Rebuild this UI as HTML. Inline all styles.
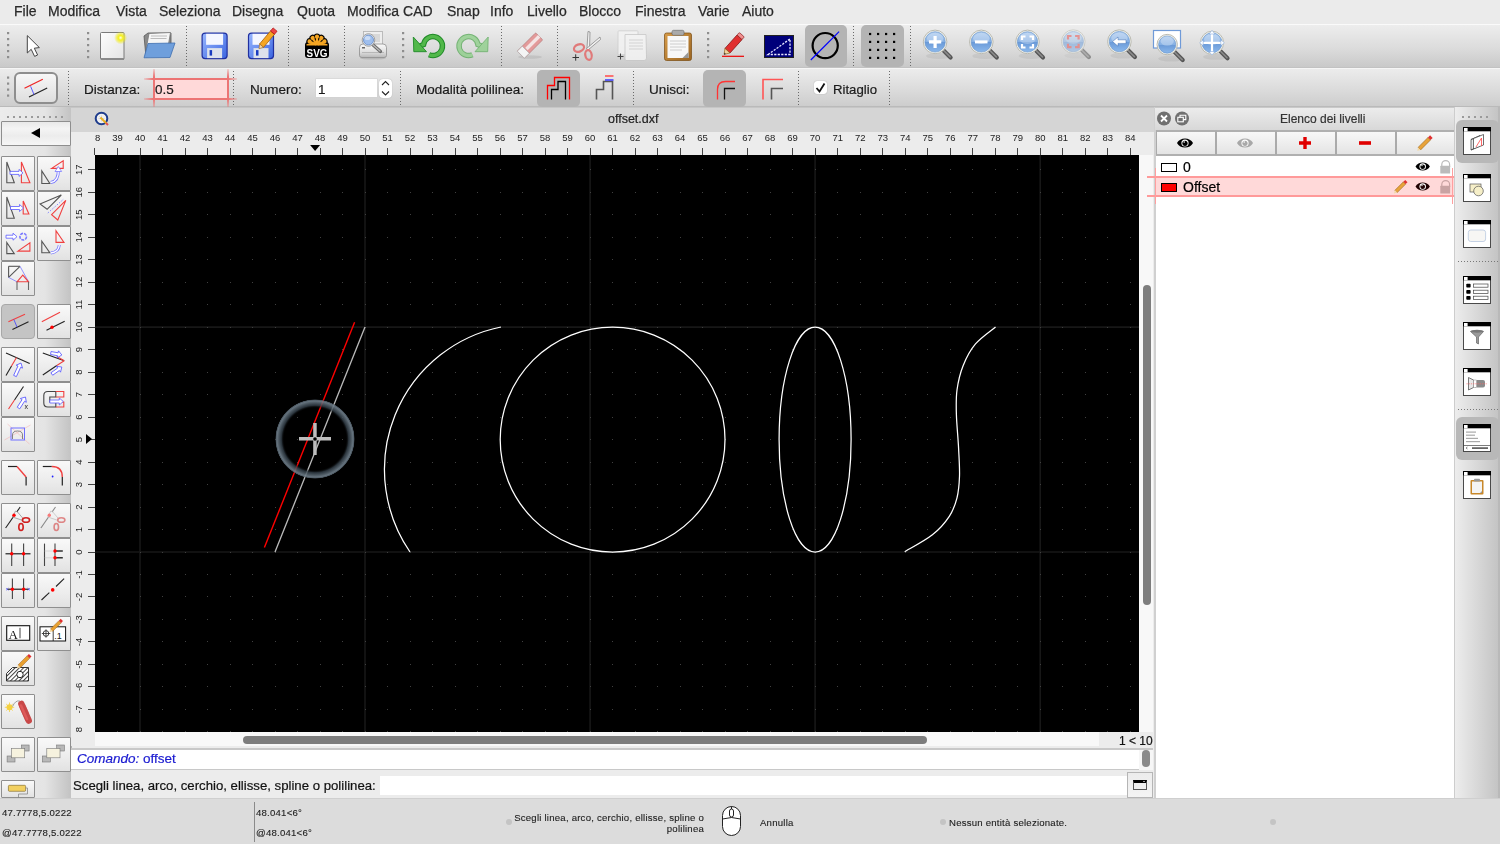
<!DOCTYPE html><html><head><meta charset="utf-8"><style>
*{margin:0;padding:0;box-sizing:border-box}
html,body{width:1500px;height:844px;overflow:hidden;background:#ececec;font-family:"Liberation Sans",sans-serif;color:#1a1a1a}
.a{position:absolute}
.t{position:absolute;white-space:nowrap;line-height:1;will-change:transform;-webkit-text-stroke-width:.2px}
#menubar{left:0;top:0;width:1500px;height:24px;background:#ebebeb}
#menubar span{will-change:transform;-webkit-text-stroke:.25px #2a2a2a;position:absolute;top:4px;font-size:14px;color:#2a2a2a;white-space:nowrap;line-height:1}
#tb1{left:0;top:24px;width:1500px;height:44px;background:linear-gradient(#ededed,#dcdcdc 55%,#c9c9c9);border-top:1px solid #fafafa;border-bottom:1px solid #c2c2c2}
#tb2{left:0;top:68px;width:1500px;height:39px;background:linear-gradient(#ececec,#dadada 60%,#cdcdcd);border-top:1px solid #f6f6f6;border-bottom:1px solid #bababa}
.sep{position:absolute;width:1px;background-image:linear-gradient(#6a6a6a 50%,transparent 50%);background-size:1px 3px}
.hl{position:absolute;background:#b4b4b4;border-radius:5px}
#leftcol{left:0;top:107px;width:72px;height:691px;background:linear-gradient(90deg,#ececec 0,#e4e4e4 45px,#c4c4c4 70px);border-right:1.5px solid #b4b4b4}
.lb{position:absolute;width:34px;height:35px;background:linear-gradient(#f9f9f9,#ececec 60%,#e2e2e2);border:1px solid #8f8f8f;border-radius:1px}
.lb.on{background:#c4c4c4;border-color:#a8a8a8;border-radius:4px}
#tabbar{left:71px;top:107px;width:1083px;height:25px;background:#d5d5d5;border-top:1px solid #c6c6c6}
#ruler-top{left:71px;top:132px;width:1083px;height:23px;background:#ececec}
#ruler-left{left:71px;top:155px;width:24px;height:591px;background:#ececec}
#draw{left:95px;top:155px;width:1044px;height:577px;background:#000}
#vscroll{left:1139px;top:155px;width:14px;height:577px;background:#f8f8f8}
#hscroll{left:95px;top:732px;width:1004px;height:14px;background:#f8f8f8}
#zoomlbl{left:1099px;top:732px;width:54px;height:14px;background:#ececec}
#cmdhist{left:71px;top:748px;width:1082px;height:22px;background:#fff;border-top:2px solid #c8c8c8;border-bottom:1px solid #c8c8c8}
#cmdrow{left:71px;top:770px;width:1082px;height:28px;background:#ececec}
#dock{left:1154px;top:107px;width:301px;height:691px;background:#fff;border-left:2px solid #d0d0d0}
#righttb{left:1454px;top:107px;width:46px;height:691px;background:linear-gradient(90deg,#ededed 0,#c4c4c4 43px,#b9b9b9 43px);border-left:1.5px solid #cdcdcd}
#status{left:0;top:798px;width:1500px;height:46px;background:#dcdcdc;border-top:1px solid #cfcfcf}
.st{font-size:9.6px;color:#1e1e1e;letter-spacing:.22px;-webkit-text-stroke-width:.12px}
</style></head><body><div id="menubar" class="a"><span style="left:14.3px">File</span><span style="left:48.3px">Modifica</span><span style="left:115.7px">Vista</span><span style="left:159.3px">Seleziona</span><span style="left:232.3px">Disegna</span><span style="left:296.7px">Quota</span><span style="left:347.3px">Modifica CAD</span><span style="left:446.7px">Snap</span><span style="left:490px">Info</span><span style="left:526.7px">Livello</span><span style="left:579.3px">Blocco</span><span style="left:635px">Finestra</span><span style="left:698.3px">Varie</span><span style="left:742.3px">Aiuto</span></div><div id="tb1" class="a"></div><div class="sep" style="left:185.5px;top:26px;height:40px"></div><div class="sep" style="left:287.5px;top:26px;height:40px"></div><div class="sep" style="left:343.5px;top:26px;height:40px"></div><div class="sep" style="left:501px;top:26px;height:40px"></div><div class="sep" style="left:556.5px;top:26px;height:40px"></div><div class="sep" style="left:852.5px;top:26px;height:40px"></div><div class="sep" style="left:909.5px;top:26px;height:40px"></div><div class="hl" style="left:805px;top:25px;width:42px;height:42px"></div><div class="hl" style="left:861px;top:25px;width:43px;height:42px"></div><div id="tb2" class="a"></div><div class="sep" style="left:67.5px;top:71px;height:34px"></div><div class="sep" style="left:233px;top:71px;height:34px"></div><div class="sep" style="left:399.5px;top:71px;height:34px"></div><div class="sep" style="left:633px;top:71px;height:34px"></div><div class="sep" style="left:798px;top:71px;height:34px"></div><div class="sep" style="left:889px;top:71px;height:34px"></div><div class="a" style="left:14px;top:72px;width:44px;height:32px;border:2px solid #8e8e8e;border-radius:6px;background:linear-gradient(#f7f7f7,#dedede)"></div><div class="t" style="left:84px;top:82.5px;font-size:13.5px">Distanza:</div><div class="a" style="left:153px;top:78px;width:75px;height:21px;background:#ffd9d9"></div><div class="a" style="left:144px;top:77.5px;width:93px;height:2px;background:linear-gradient(90deg,rgba(240,110,110,.2),#ec7474 9px,#ec7474 84px,rgba(240,110,110,.2))"></div><div class="a" style="left:144px;top:97.5px;width:93px;height:2px;background:linear-gradient(90deg,rgba(240,110,110,.2),#ec7474 9px,#ec7474 84px,rgba(240,110,110,.2))"></div><div class="a" style="left:152.5px;top:69px;width:2px;height:39px;background:linear-gradient(rgba(240,110,110,.2),#ec7474 8px,#ec7474 30px,rgba(240,110,110,.2))"></div><div class="a" style="left:227px;top:69px;width:2px;height:39px;background:linear-gradient(rgba(240,110,110,.2),#ec7474 8px,#ec7474 30px,rgba(240,110,110,.2))"></div><div class="t" style="left:155px;top:82.5px;font-size:13.5px">0.5</div><div class="t" style="left:250px;top:82.5px;font-size:13.5px">Numero:</div><div class="a" style="left:316px;top:79px;width:61px;height:18px;background:#fff;box-shadow:0 0 0 .5px #d0d0d0"></div><div class="t" style="left:318px;top:82.5px;font-size:13.5px">1</div><div class="a" style="left:379px;top:79px;width:13px;height:19px;background:#fff;border-radius:4px;box-shadow:0 0 1px #999"></div><div class="t" style="left:416px;top:82.5px;font-size:13.5px">Modalità polilinea:</div><div class="hl" style="left:537px;top:70px;width:43px;height:37px"></div><div class="t" style="left:649px;top:82.5px;font-size:13.5px">Unisci:</div><div class="hl" style="left:703px;top:70px;width:43px;height:37px"></div><div class="a" style="left:814px;top:81px;width:13px;height:13px;background:#fff;border-radius:3px;box-shadow:0 0 1px #888"></div><div class="t" style="left:833px;top:82.5px;font-size:13.2px">Ritaglio</div><svg class="a" style="left:0;top:24px" width="1300" height="84"><g transform="translate(0 -24)"><defs><linearGradient id="gBlue" x1="0" y1="0" x2="0" y2="1"><stop offset="0" stop-color="#a9c8ee"/><stop offset=".5" stop-color="#86b0e4"/><stop offset=".52" stop-color="#6a9ad8"/><stop offset="1" stop-color="#8bb8ec"/></linearGradient><linearGradient id="gPaper" x1="0" y1="0" x2="1" y2="1"><stop offset="0" stop-color="#fdfdfd"/><stop offset="1" stop-color="#e4e4e4"/></linearGradient><radialGradient id="gGlow"><stop offset="0" stop-color="#ffffe0"/><stop offset=".35" stop-color="#f5f020"/><stop offset="1" stop-color="#f0e800" stop-opacity="0"/></radialGradient><linearGradient id="gFloppy" x1="0" y1="0" x2="1" y2="1"><stop offset="0" stop-color="#9ab8ff"/><stop offset="1" stop-color="#3a64e0"/></linearGradient><linearGradient id="gGreen" x1="0" y1="0" x2="0" y2="1"><stop offset="0" stop-color="#7cd46a"/><stop offset="1" stop-color="#2f9a2a"/></linearGradient><linearGradient id="gClip" x1="0" y1="0" x2="1" y2="1"><stop offset="0" stop-color="#d79c4a"/><stop offset="1" stop-color="#9a6420"/></linearGradient></defs><rect x="7" y="32" width="2.2" height="2.2" fill="#8e8e8e"/><rect x="7" y="38" width="2.2" height="2.2" fill="#8e8e8e"/><rect x="7" y="44" width="2.2" height="2.2" fill="#8e8e8e"/><rect x="7" y="50" width="2.2" height="2.2" fill="#8e8e8e"/><rect x="7" y="56" width="2.2" height="2.2" fill="#8e8e8e"/><rect x="87" y="32" width="2.2" height="2.2" fill="#8e8e8e"/><rect x="87" y="38" width="2.2" height="2.2" fill="#8e8e8e"/><rect x="87" y="44" width="2.2" height="2.2" fill="#8e8e8e"/><rect x="87" y="50" width="2.2" height="2.2" fill="#8e8e8e"/><rect x="87" y="56" width="2.2" height="2.2" fill="#8e8e8e"/><rect x="402" y="32" width="2.2" height="2.2" fill="#8e8e8e"/><rect x="402" y="38" width="2.2" height="2.2" fill="#8e8e8e"/><rect x="402" y="44" width="2.2" height="2.2" fill="#8e8e8e"/><rect x="402" y="50" width="2.2" height="2.2" fill="#8e8e8e"/><rect x="402" y="56" width="2.2" height="2.2" fill="#8e8e8e"/><rect x="707" y="32" width="2.2" height="2.2" fill="#8e8e8e"/><rect x="707" y="38" width="2.2" height="2.2" fill="#8e8e8e"/><rect x="707" y="44" width="2.2" height="2.2" fill="#8e8e8e"/><rect x="707" y="50" width="2.2" height="2.2" fill="#8e8e8e"/><rect x="707" y="56" width="2.2" height="2.2" fill="#8e8e8e"/><rect x="7" y="76.5" width="2.2" height="2.2" fill="#8e8e8e"/><rect x="7" y="82.5" width="2.2" height="2.2" fill="#8e8e8e"/><rect x="7" y="88.5" width="2.2" height="2.2" fill="#8e8e8e"/><rect x="7" y="94.5" width="2.2" height="2.2" fill="#8e8e8e"/><path d="M27.3 35.6 L27.3 53 L31.2 49.3 L34.6 56.4 L37.6 55 L34.3 48.2 L39.4 47.6 Z" fill="#fff" stroke="#444" stroke-width="1" stroke-linejoin="round"/><rect x="100.5" y="32.5" width="23.5" height="27" rx="1" fill="url(#gPaper)" stroke="#7a7a7a" stroke-width="1"/><rect x="101" y="58" width="23" height="2" fill="#8a8a8a"/><circle cx="120.6" cy="37.8" r="6.5" fill="url(#gGlow)"/><path d="M144 36 L148 33 L171 33 L171 53 L146 57 Z" fill="#8a8a8a" stroke="#555" stroke-width=".8"/><path d="M149 33.5 L170.5 32.5 L168 47 L146 50 Z" fill="#f6f6f6" stroke="#777" stroke-width=".8"/><path d="M151 36 H167 M150.5 38.5 H166.5" stroke="#bbb" stroke-width="1.2"/><path d="M148 43.5 L175 43 L170 57.5 L144 57.8 Z" fill="#6f9fdc" stroke="#3f6fb0" stroke-width=".8"/><rect x="202.1" y="33.1" width="25" height="25.5" rx="3" fill="url(#gFloppy)" stroke="#2030a0" stroke-width="1.2"/><rect x="206.1" y="33.800000000000004" width="17" height="11" fill="#f4f6ff"/><rect x="207.1" y="48.1" width="15" height="10" fill="#dde2ec"/><rect x="209.6" y="50.1" width="2.5" height="5.5" fill="#1a3cc0"/><rect x="248.5" y="33.1" width="25" height="25.5" rx="3" fill="url(#gFloppy)" stroke="#2030a0" stroke-width="1.2"/><rect x="252.5" y="33.800000000000004" width="17" height="11" fill="#f4f6ff"/><rect x="253.5" y="48.1" width="15" height="10" fill="#dde2ec"/><rect x="256" y="50.1" width="2.5" height="5.5" fill="#1a3cc0"/><g transform="translate(268 38) rotate(-50)"><rect x="-10" y="-2.6" width="17" height="5.2" fill="#f5a623" stroke="#a05a00" stroke-width=".7"/><rect x="7" y="-2.6" width="4" height="5.2" fill="#e44" stroke="#a00" stroke-width=".6"/><path d="M-10 -2.6 L-14 0 L-10 2.6Z" fill="#f3d9a5" stroke="#a05a00" stroke-width=".5"/></g><g><g transform="translate(317 45) rotate(-64)"><path d="M0 0 L0 -7.5" stroke="#000" stroke-width="4.4" stroke-linecap="round"/><circle cx="0" cy="-8.3" r="3.2" fill="#000"/></g><g transform="translate(317 45) rotate(-32)"><path d="M0 0 L0 -7.5" stroke="#000" stroke-width="4.4" stroke-linecap="round"/><circle cx="0" cy="-8.3" r="3.2" fill="#000"/></g><g transform="translate(317 45) rotate(0)"><path d="M0 0 L0 -7.5" stroke="#000" stroke-width="4.4" stroke-linecap="round"/><circle cx="0" cy="-8.3" r="3.2" fill="#000"/></g><g transform="translate(317 45) rotate(32)"><path d="M0 0 L0 -7.5" stroke="#000" stroke-width="4.4" stroke-linecap="round"/><circle cx="0" cy="-8.3" r="3.2" fill="#000"/></g><g transform="translate(317 45) rotate(64)"><path d="M0 0 L0 -7.5" stroke="#000" stroke-width="4.4" stroke-linecap="round"/><circle cx="0" cy="-8.3" r="3.2" fill="#000"/></g><rect x="305" y="42" width="24" height="16" rx="3" fill="#000"/><g transform="translate(317 45) rotate(-64)"><path d="M0 -1 L0 -7" stroke="#f5a623" stroke-width="2.2"/><circle cx="0" cy="-8.3" r="2.1" fill="#f5a623"/></g><g transform="translate(317 45) rotate(-32)"><path d="M0 -1 L0 -7" stroke="#f5a623" stroke-width="2.2"/><circle cx="0" cy="-8.3" r="2.1" fill="#f5a623"/></g><g transform="translate(317 45) rotate(0)"><path d="M0 -1 L0 -7" stroke="#f5a623" stroke-width="2.2"/><circle cx="0" cy="-8.3" r="2.1" fill="#f5a623"/></g><g transform="translate(317 45) rotate(32)"><path d="M0 -1 L0 -7" stroke="#f5a623" stroke-width="2.2"/><circle cx="0" cy="-8.3" r="2.1" fill="#f5a623"/></g><g transform="translate(317 45) rotate(64)"><path d="M0 -1 L0 -7" stroke="#f5a623" stroke-width="2.2"/><circle cx="0" cy="-8.3" r="2.1" fill="#f5a623"/></g><path d="M306.5 44.2 Q317 40.5 327.5 44.2 L327.5 45.5 L306.5 45.5Z" fill="#f5a623"/><text x="317" y="56.5" font-size="11.5" font-weight="bold" text-anchor="middle" fill="#fff" font-family="Liberation Sans" textLength="21" lengthAdjust="spacingAndGlyphs">SVG</text></g><defs><linearGradient id="gPrn" x1="0" y1="0" x2="0" y2="1"><stop offset="0" stop-color="#fafafa"/><stop offset=".6" stop-color="#dedede"/><stop offset="1" stop-color="#b8b8b8"/></linearGradient></defs><ellipse cx="373" cy="58" rx="13" ry="1.6" fill="#000" opacity=".12"/><rect x="363.5" y="31.5" width="19" height="15" fill="#eee" stroke="#b0b0b0" stroke-width=".8"/><rect x="371" y="34" width="9" height="8" fill="#d8d8d8"/><path d="M359.5 47.5 Q359.5 44 363 44 L383 44 Q386.5 44 386.5 47.5 L386.5 55.5 Q386.5 57.5 384 57.5 L362 57.5 Q359.5 57.5 359.5 55.5Z" fill="url(#gPrn)" stroke="#8e8e8e" stroke-width=".8"/><path d="M362 52.5 H384" stroke="#a8a8a8" stroke-width=".7"/><rect x="362" y="47" width="3" height="1.5" fill="#666"/><path d="M372 44 L380.5 51.5" stroke="#6a6a6a" stroke-width="3.2" stroke-linecap="round"/><path d="M372 44 L380 51" stroke="#bbb" stroke-width="1.2" stroke-linecap="round"/><circle cx="368.5" cy="40" r="6.3" fill="#f2f2f2" stroke="#9a9a9a" stroke-width=".9"/><circle cx="368.5" cy="40" r="5" fill="#9fbfee" stroke="#5f86c4" stroke-width=".8"/><ellipse cx="367.5" cy="38" rx="3" ry="2" fill="#fff" opacity=".45"/><g transform="translate(412.5 0)" opacity="1"><path d="M7.5 46 L11.1 44.5 A9.5 9.5 0 1 1 16.6 54.7" fill="none" stroke="#208a28" stroke-width="5.4"/><path d="M7.5 46 L11.1 44.5 A9.5 9.5 0 1 1 16.6 54.7" fill="none" stroke="#52b84a" stroke-width="3.4"/><path d="M0.8 37 L1.3 51.7 L14 51.7 Z" fill="#52b84a" stroke="#208a28" stroke-width=".9" stroke-linejoin="round"/></g><g transform="translate(489.0 0) scale(-1 1)" opacity="0.8"><path d="M7.5 46 L11.1 44.5 A9.5 9.5 0 1 1 16.6 54.7" fill="none" stroke="#5aa85a" stroke-width="5.4"/><path d="M7.5 46 L11.1 44.5 A9.5 9.5 0 1 1 16.6 54.7" fill="none" stroke="#8fcf8a" stroke-width="3.4"/><path d="M0.8 37 L1.3 51.7 L14 51.7 Z" fill="#8fcf8a" stroke="#5aa85a" stroke-width=".9" stroke-linejoin="round"/></g><ellipse cx="530" cy="57" rx="12" ry="1.8" fill="#000" opacity=".08"/><g transform="translate(530 45.5) rotate(-45)"><rect x="-13" y="-5" width="26" height="10" rx="1" fill="#e39a9a" stroke="#b07070" stroke-width=".6"/><rect x="-5" y="-1.7" width="18" height="3.4" fill="#f4e4e4"/><rect x="-13" y="-5" width="7" height="10" fill="#f4f4f4" stroke="#aaa" stroke-width=".6"/></g><path d="M587 48 L588 31.5 L590 32 L589.5 49" fill="#f2f2f2" stroke="#888" stroke-width=".8"/><path d="M586 49 L600 37 L600.5 39.5 L588 50" fill="#f2f2f2" stroke="#888" stroke-width=".8"/><ellipse cx="579" cy="48" rx="5.2" ry="3.6" fill="none" stroke="#e07a7a" stroke-width="2.2" transform="rotate(-20 579 48)"/><ellipse cx="588.5" cy="55" rx="3.2" ry="5" fill="none" stroke="#e07a7a" stroke-width="2.2" transform="rotate(-10 588.5 55)"/><path d="M572.5 57.5 H579 M575.7 54.3 V60.7" stroke="#333" stroke-width="1"/><g opacity=".8"><rect x="618" y="30.8" width="20" height="24" rx="1" fill="#f4f4f4" stroke="#c8c8c8" stroke-width=".8"/><path d="M625 34.5 H646 L646.5 58 Q646.5 60.5 644 60.5 L626 60.5 Q625 60.5 625 59Z" fill="#f6f6f6" stroke="#c0c0c0" stroke-width=".8"/><path d="M629 40 H643 M629 43 H643 M629 46 H643 M629 49 H643" stroke="#ccc" stroke-width=".9"/></g><path d="M617.5 56.5 H623.5 M620.5 53.5 V59.5" stroke="#444" stroke-width="1"/><rect x="664.5" y="33" width="27" height="27.5" rx="2" fill="url(#gClip)" stroke="#7a4a10" stroke-width=".7"/><rect x="667.5" y="36" width="21" height="22" fill="#f8f8f8"/><path d="M670 41 H686 M670 44 H686 M670 47 H686 M670 50 H682" stroke="#c8c8c8" stroke-width=".9"/><rect x="672" y="30.3" width="12" height="5" rx="1.5" fill="#aaa" stroke="#666" stroke-width=".6"/><path d="M682.5 58 L688.5 52 L688.5 58Z" fill="#999"/><path d="M722 56.3 H744" stroke="#e00" stroke-width="1.2"/><g transform="translate(733.5 44) rotate(-48)"><rect x="-9" y="-3.4" width="18" height="6.8" fill="#e03030" stroke="#801010" stroke-width=".7"/><rect x="9" y="-3.4" width="3.5" height="6.8" rx="1" fill="#f09090" stroke="#801010" stroke-width=".6"/><path d="M-9 -3.4 L-14 0 L-9 3.4Z" fill="#f1d3a0" stroke="#8a5a10" stroke-width=".6"/><path d="M-12.5 -1 L-14.3 0 L-12.5 1Z" fill="#333"/></g><rect x="764.5" y="35.5" width="29" height="22" fill="#00007a" stroke="#222" stroke-width="1"/><path d="M768 54.5 L790 39 L790 54.5 Z" fill="none" stroke="#e8e8ff" stroke-width="1.3" stroke-dasharray="2.2 1.3"/><circle cx="825.2" cy="45.6" r="12.6" fill="none" stroke="#000" stroke-width="2.2"/><path d="M810.8 60 L839.1 31.7" stroke="#0000ff" stroke-width="1.2"/><rect x="869" y="32.9" width="2.2" height="2.2" fill="#000"/><rect x="869" y="40.8" width="2.2" height="2.2" fill="#000"/><rect x="869" y="48.8" width="2.2" height="2.2" fill="#000"/><rect x="869" y="56.8" width="2.2" height="2.2" fill="#000"/><rect x="877" y="32.9" width="2.2" height="2.2" fill="#000"/><rect x="877" y="40.8" width="2.2" height="2.2" fill="#000"/><rect x="877" y="48.8" width="2.2" height="2.2" fill="#000"/><rect x="877" y="56.8" width="2.2" height="2.2" fill="#000"/><rect x="885" y="32.9" width="2.2" height="2.2" fill="#000"/><rect x="885" y="40.8" width="2.2" height="2.2" fill="#000"/><rect x="885" y="48.8" width="2.2" height="2.2" fill="#000"/><rect x="885" y="56.8" width="2.2" height="2.2" fill="#000"/><rect x="893" y="32.9" width="2.2" height="2.2" fill="#000"/><rect x="893" y="40.8" width="2.2" height="2.2" fill="#000"/><rect x="893" y="48.8" width="2.2" height="2.2" fill="#000"/><rect x="893" y="56.8" width="2.2" height="2.2" fill="#000"/><g><ellipse cx="939.1" cy="55.9" rx="13" ry="3" fill="#000" opacity=".06"/><path d="M942.6 49.4 L950.6 57.4" stroke="#555" stroke-width="4.2" stroke-linecap="round"/><path d="M942.6 49.4 L950.1 56.9" stroke="#8a8a8a" stroke-width="1.6" stroke-linecap="round"/><circle cx="935.1" cy="41.9" r="11.799999999999999" fill="#f4f4ee" stroke="#b9b9b0" stroke-width="1"/><circle cx="935.1" cy="41.9" r="10.2" fill="url(#gBlue)" stroke="#5f8fc8" stroke-width=".6"/><ellipse cx="935.1" cy="38.4" rx="8.2" ry="5.61" fill="#fff" opacity=".28"/><path d="M935.1 36 V48 M929 41.9 H941.2" stroke="#fff" stroke-width="3.2"/></g><g><ellipse cx="985.3" cy="55.9" rx="13" ry="3" fill="#000" opacity=".06"/><path d="M988.8 49.4 L996.8 57.4" stroke="#555" stroke-width="4.2" stroke-linecap="round"/><path d="M988.8 49.4 L996.3 56.9" stroke="#8a8a8a" stroke-width="1.6" stroke-linecap="round"/><circle cx="981.3" cy="41.9" r="11.799999999999999" fill="#f4f4ee" stroke="#b9b9b0" stroke-width="1"/><circle cx="981.3" cy="41.9" r="10.2" fill="url(#gBlue)" stroke="#5f8fc8" stroke-width=".6"/><ellipse cx="981.3" cy="38.4" rx="8.2" ry="5.61" fill="#fff" opacity=".28"/><path d="M975 41.9 H987.5" stroke="#fff" stroke-width="3"/></g><g><ellipse cx="1031.5" cy="55.9" rx="13" ry="3" fill="#000" opacity=".06"/><path d="M1035.0 49.4 L1043.0 57.4" stroke="#555" stroke-width="4.2" stroke-linecap="round"/><path d="M1035.0 49.4 L1042.5 56.9" stroke="#8a8a8a" stroke-width="1.6" stroke-linecap="round"/><circle cx="1027.5" cy="41.9" r="11.799999999999999" fill="#f4f4ee" stroke="#b9b9b0" stroke-width="1"/><circle cx="1027.5" cy="41.9" r="10.2" fill="url(#gBlue)" stroke="#5f8fc8" stroke-width=".6"/><ellipse cx="1027.5" cy="38.4" rx="8.2" ry="5.61" fill="#fff" opacity=".28"/><path d="M1022 40 v-3.5 h3.5 M1033 40 v-3.5 h-3.5 M1022 44 v3.5 h3.5 M1033 44 v3.5 h-3.5" fill="none" stroke="#fff" stroke-width="2.2"/></g><g opacity="0.55"><ellipse cx="1077.3" cy="55.6" rx="13" ry="3" fill="#000" opacity=".06"/><path d="M1080.8 49.1 L1088.8 57.1" stroke="#555" stroke-width="4.2" stroke-linecap="round"/><path d="M1080.8 49.1 L1088.3 56.6" stroke="#8a8a8a" stroke-width="1.6" stroke-linecap="round"/><circle cx="1073.3" cy="41.6" r="11.799999999999999" fill="#f4f4ee" stroke="#b9b9b0" stroke-width="1"/><circle cx="1073.3" cy="41.6" r="10.2" fill="url(#gBlue)" stroke="#5f8fc8" stroke-width=".6"/><ellipse cx="1073.3" cy="38.1" rx="8.2" ry="5.61" fill="#fff" opacity=".28"/><path d="M1068 39.5 v-3.5 h3.5 M1078.6 39.5 v-3.5 h-3.5 M1068 43.7 v3.5 h3.5 M1078.6 43.7 v3.5 h-3.5" fill="none" stroke="#e35050" stroke-width="2.2"/></g><g><ellipse cx="1123.4" cy="55.6" rx="13" ry="3" fill="#000" opacity=".06"/><path d="M1126.9 49.1 L1134.9 57.1" stroke="#555" stroke-width="4.2" stroke-linecap="round"/><path d="M1126.9 49.1 L1134.4 56.6" stroke="#8a8a8a" stroke-width="1.6" stroke-linecap="round"/><circle cx="1119.4" cy="41.6" r="11.799999999999999" fill="#f4f4ee" stroke="#b9b9b0" stroke-width="1"/><circle cx="1119.4" cy="41.6" r="10.2" fill="url(#gBlue)" stroke="#5f8fc8" stroke-width=".6"/><ellipse cx="1119.4" cy="38.1" rx="8.2" ry="5.61" fill="#fff" opacity=".28"/><path d="M1112.5 41.6 L1118 37 V39.8 H1126 V43.4 H1118 V46.2 Z" fill="#fff" stroke="#3a6ab0" stroke-width=".5"/></g><rect x="1153.5" y="30.5" width="27" height="17.5" fill="#fff" stroke="#6f9ad8" stroke-width="1.2"/><g><ellipse cx="1171.2" cy="58.6" rx="13" ry="3" fill="#000" opacity=".06"/><path d="M1174.7 52.1 L1182.7 60.1" stroke="#555" stroke-width="4.2" stroke-linecap="round"/><path d="M1174.7 52.1 L1182.2 59.6" stroke="#8a8a8a" stroke-width="1.6" stroke-linecap="round"/><circle cx="1167.2" cy="44.6" r="10.2" fill="#f4f4ee" stroke="#b9b9b0" stroke-width="1"/><circle cx="1167.2" cy="44.6" r="8.6" fill="url(#gBlue)" stroke="#5f8fc8" stroke-width=".6"/><ellipse cx="1167.2" cy="41.1" rx="6.6" ry="4.73" fill="#fff" opacity=".28"/></g><g><ellipse cx="1216" cy="56.8" rx="13" ry="3" fill="#000" opacity=".06"/><path d="M1219.5 50.3 L1227.5 58.3" stroke="#555" stroke-width="4.2" stroke-linecap="round"/><path d="M1219.5 50.3 L1227 57.8" stroke="#8a8a8a" stroke-width="1.6" stroke-linecap="round"/><circle cx="1212" cy="42.8" r="11.6" fill="#f4f4ee" stroke="#b9b9b0" stroke-width="1"/><circle cx="1212" cy="42.8" r="10" fill="url(#gBlue)" stroke="#5f8fc8" stroke-width=".6"/><ellipse cx="1212" cy="39.3" rx="8" ry="5.5" fill="#fff" opacity=".28"/><path d="M1212 31 V54.5 M1200.2 42.8 H1223.8" stroke="#fff" stroke-width="2.2"/><path d="M1212 30.5 l-3 3.5 h6z M1212 55 l-3 -3.5 h6z M1199.7 42.8 l3.5 -3 v6z M1224.3 42.8 l-3.5 -3 v6z" fill="#fff" stroke="#6f9ad8" stroke-width=".5"/></g><path d="M24.5 88.3 L42.8 79.3" stroke="#ee2222" stroke-width="1.2"/><path d="M29 97 L47.2 88" stroke="#222" stroke-width="1.2"/><path d="M30.6 86.3 L34 94.6" stroke="#4a4aff" stroke-width=".9"/><path d="M382 85 L385.5 81.5 L389 85 M382 91.5 L385.5 95 L389 91.5" fill="none" stroke="#222" stroke-width="1.1"/><path d="M547.5 99.5 V85.5 H554.5 V77.5 H569.5 V99.5" fill="none" stroke="#f00" stroke-width="1.3"/><path d="M551.5 99.5 V89.5 H558 V81.5 H565.5 V99.5" fill="none" stroke="#000" stroke-width="1.3"/><path d="M596.5 99.5 V89.5 H603.5 V81.5 H612.5 V99.5" fill="none" stroke="#555" stroke-width="1.6"/><path d="M605 76 H613.5" stroke="#f55" stroke-width="1.6"/><path d="M605 80 H613.5" stroke="#4444ff" stroke-width="1.6"/><path d="M717.5 99.5 V89.5 Q717.5 81.5 725.5 81.5 H735" fill="none" stroke="#f33" stroke-width="1.3"/><path d="M724.5 99.5 V88.5 H735" fill="none" stroke="#111" stroke-width="1.3"/><path d="M763 99.5 V79.5 H783" fill="none" stroke="#f55" stroke-width="1.6"/><path d="M771.5 99.5 V88.5 H783" fill="none" stroke="#555" stroke-width="1.6"/><path d="M816.5 88 L819.5 91.5 L824.5 83.5" fill="none" stroke="#111" stroke-width="1.8"/></g></svg><div id="leftcol" class="a"></div><div class="a" style="left:7px;top:116px;width:58px;height:2px;background-image:linear-gradient(90deg,#9a9a9a 2px,transparent 2px);background-size:6px 2px"></div><div class="a" style="left:1px;top:120.5px;width:70px;height:25.5px;background:linear-gradient(#e9e9e9,#f4f4f4 30%,#ececec 60%,#f6f6f6);border:1px solid #8e8e8e;border-radius:1px"></div><div class="a" style="left:31px;top:128px;width:0;height:0;border-top:5px solid transparent;border-bottom:5px solid transparent;border-right:9px solid #000"></div><div class="lb" style="left:1.0px;top:156px;height:35px"></div><div class="lb" style="left:36.5px;top:156px;height:35px"></div><div class="lb" style="left:1.0px;top:191px;height:35px"></div><div class="lb" style="left:36.5px;top:191px;height:35px"></div><div class="lb" style="left:1.0px;top:226px;height:35px"></div><div class="lb" style="left:36.5px;top:226px;height:35px"></div><div class="lb" style="left:1.0px;top:261px;height:35px"></div><div class="lb on" style="left:1.0px;top:304px;height:35px"></div><div class="lb" style="left:36.5px;top:304px;height:35px"></div><div class="lb" style="left:1.0px;top:347px;height:35px"></div><div class="lb" style="left:36.5px;top:347px;height:35px"></div><div class="lb" style="left:1.0px;top:382px;height:35px"></div><div class="lb" style="left:36.5px;top:382px;height:35px"></div><div class="lb" style="left:1.0px;top:417px;height:35px"></div><div class="lb" style="left:1.0px;top:460px;height:35px"></div><div class="lb" style="left:36.5px;top:460px;height:35px"></div><div class="lb" style="left:1.0px;top:503px;height:35px"></div><div class="lb" style="left:36.5px;top:503px;height:35px"></div><div class="lb" style="left:1.0px;top:538px;height:35px"></div><div class="lb" style="left:36.5px;top:538px;height:35px"></div><div class="lb" style="left:1.0px;top:573px;height:35px"></div><div class="lb" style="left:36.5px;top:573px;height:35px"></div><div class="lb" style="left:1.0px;top:616px;height:35px"></div><div class="lb" style="left:36.5px;top:616px;height:35px"></div><div class="lb" style="left:1.0px;top:651px;height:35px"></div><div class="lb" style="left:1.0px;top:694px;height:35px"></div><div class="lb" style="left:1.0px;top:737px;height:35px"></div><div class="lb" style="left:36.5px;top:737px;height:35px"></div><div class="lb" style="left:1.0px;top:780px;height:18px"></div><div id="tabbar" class="a"></div><div class="t" style="left:608px;top:113px;font-size:12.5px;color:#222">offset.dxf</div><svg class="a" style="left:94px;top:111px" width="18" height="18"><circle cx="7.5" cy="7.5" r="5.8" fill="#f0f0f0" stroke="#1e3c8c" stroke-width="2"/><path d="M5 5 L9 9 M4.5 7.5 H10.5 M7.5 4.5 V10.5" stroke="#c8c8c8" stroke-width=".6"/><path d="M6.5 6.5 L12.5 12.5" stroke="#e8b020" stroke-width="2"/><path d="M12 12 L14 14" stroke="#e05050" stroke-width="2"/></svg><div id="ruler-top" class="a"></div><div id="ruler-left" class="a"></div><svg class="a" style="left:0;top:0" width="1500" height="844"><defs><clipPath id="rclip"><rect x="95" y="130" width="1050" height="25"/></clipPath></defs><line x1="94.5" y1="148" x2="94.5" y2="155" stroke="#444" stroke-width="1"/><text x="95.0" y="141" clip-path="url(#rclip)" font-size="9.5" text-anchor="middle" fill="#222" font-family="Liberation Sans">38</text><line x1="117.5" y1="148" x2="117.5" y2="155" stroke="#444" stroke-width="1"/><text x="117.5" y="141" clip-path="url(#rclip)" font-size="9.5" text-anchor="middle" fill="#222" font-family="Liberation Sans">39</text><line x1="140.5" y1="148" x2="140.5" y2="155" stroke="#444" stroke-width="1"/><text x="140.0" y="141" clip-path="url(#rclip)" font-size="9.5" text-anchor="middle" fill="#222" font-family="Liberation Sans">40</text><line x1="162.5" y1="148" x2="162.5" y2="155" stroke="#444" stroke-width="1"/><text x="162.5" y="141" clip-path="url(#rclip)" font-size="9.5" text-anchor="middle" fill="#222" font-family="Liberation Sans">41</text><line x1="185.5" y1="148" x2="185.5" y2="155" stroke="#444" stroke-width="1"/><text x="185.0" y="141" clip-path="url(#rclip)" font-size="9.5" text-anchor="middle" fill="#222" font-family="Liberation Sans">42</text><line x1="207.5" y1="148" x2="207.5" y2="155" stroke="#444" stroke-width="1"/><text x="207.5" y="141" clip-path="url(#rclip)" font-size="9.5" text-anchor="middle" fill="#222" font-family="Liberation Sans">43</text><line x1="230.5" y1="148" x2="230.5" y2="155" stroke="#444" stroke-width="1"/><text x="230.0" y="141" clip-path="url(#rclip)" font-size="9.5" text-anchor="middle" fill="#222" font-family="Liberation Sans">44</text><line x1="252.5" y1="148" x2="252.5" y2="155" stroke="#444" stroke-width="1"/><text x="252.5" y="141" clip-path="url(#rclip)" font-size="9.5" text-anchor="middle" fill="#222" font-family="Liberation Sans">45</text><line x1="275.5" y1="148" x2="275.5" y2="155" stroke="#444" stroke-width="1"/><text x="275.0" y="141" clip-path="url(#rclip)" font-size="9.5" text-anchor="middle" fill="#222" font-family="Liberation Sans">46</text><line x1="297.5" y1="148" x2="297.5" y2="155" stroke="#444" stroke-width="1"/><text x="297.5" y="141" clip-path="url(#rclip)" font-size="9.5" text-anchor="middle" fill="#222" font-family="Liberation Sans">47</text><line x1="320.5" y1="148" x2="320.5" y2="155" stroke="#444" stroke-width="1"/><text x="320.0" y="141" clip-path="url(#rclip)" font-size="9.5" text-anchor="middle" fill="#222" font-family="Liberation Sans">48</text><line x1="342.5" y1="148" x2="342.5" y2="155" stroke="#444" stroke-width="1"/><text x="342.5" y="141" clip-path="url(#rclip)" font-size="9.5" text-anchor="middle" fill="#222" font-family="Liberation Sans">49</text><line x1="365.5" y1="148" x2="365.5" y2="155" stroke="#444" stroke-width="1"/><text x="365.0" y="141" clip-path="url(#rclip)" font-size="9.5" text-anchor="middle" fill="#222" font-family="Liberation Sans">50</text><line x1="387.5" y1="148" x2="387.5" y2="155" stroke="#444" stroke-width="1"/><text x="387.6" y="141" clip-path="url(#rclip)" font-size="9.5" text-anchor="middle" fill="#222" font-family="Liberation Sans">51</text><line x1="410.5" y1="148" x2="410.5" y2="155" stroke="#444" stroke-width="1"/><text x="410.1" y="141" clip-path="url(#rclip)" font-size="9.5" text-anchor="middle" fill="#222" font-family="Liberation Sans">52</text><line x1="432.5" y1="148" x2="432.5" y2="155" stroke="#444" stroke-width="1"/><text x="432.6" y="141" clip-path="url(#rclip)" font-size="9.5" text-anchor="middle" fill="#222" font-family="Liberation Sans">53</text><line x1="455.5" y1="148" x2="455.5" y2="155" stroke="#444" stroke-width="1"/><text x="455.1" y="141" clip-path="url(#rclip)" font-size="9.5" text-anchor="middle" fill="#222" font-family="Liberation Sans">54</text><line x1="477.5" y1="148" x2="477.5" y2="155" stroke="#444" stroke-width="1"/><text x="477.6" y="141" clip-path="url(#rclip)" font-size="9.5" text-anchor="middle" fill="#222" font-family="Liberation Sans">55</text><line x1="500.5" y1="148" x2="500.5" y2="155" stroke="#444" stroke-width="1"/><text x="500.1" y="141" clip-path="url(#rclip)" font-size="9.5" text-anchor="middle" fill="#222" font-family="Liberation Sans">56</text><line x1="522.5" y1="148" x2="522.5" y2="155" stroke="#444" stroke-width="1"/><text x="522.6" y="141" clip-path="url(#rclip)" font-size="9.5" text-anchor="middle" fill="#222" font-family="Liberation Sans">57</text><line x1="545.5" y1="148" x2="545.5" y2="155" stroke="#444" stroke-width="1"/><text x="545.1" y="141" clip-path="url(#rclip)" font-size="9.5" text-anchor="middle" fill="#222" font-family="Liberation Sans">58</text><line x1="567.5" y1="148" x2="567.5" y2="155" stroke="#444" stroke-width="1"/><text x="567.6" y="141" clip-path="url(#rclip)" font-size="9.5" text-anchor="middle" fill="#222" font-family="Liberation Sans">59</text><line x1="590.5" y1="148" x2="590.5" y2="155" stroke="#444" stroke-width="1"/><text x="590.1" y="141" clip-path="url(#rclip)" font-size="9.5" text-anchor="middle" fill="#222" font-family="Liberation Sans">60</text><line x1="612.5" y1="148" x2="612.5" y2="155" stroke="#444" stroke-width="1"/><text x="612.6" y="141" clip-path="url(#rclip)" font-size="9.5" text-anchor="middle" fill="#222" font-family="Liberation Sans">61</text><line x1="635.5" y1="148" x2="635.5" y2="155" stroke="#444" stroke-width="1"/><text x="635.1" y="141" clip-path="url(#rclip)" font-size="9.5" text-anchor="middle" fill="#222" font-family="Liberation Sans">62</text><line x1="657.5" y1="148" x2="657.5" y2="155" stroke="#444" stroke-width="1"/><text x="657.6" y="141" clip-path="url(#rclip)" font-size="9.5" text-anchor="middle" fill="#222" font-family="Liberation Sans">63</text><line x1="680.5" y1="148" x2="680.5" y2="155" stroke="#444" stroke-width="1"/><text x="680.1" y="141" clip-path="url(#rclip)" font-size="9.5" text-anchor="middle" fill="#222" font-family="Liberation Sans">64</text><line x1="702.5" y1="148" x2="702.5" y2="155" stroke="#444" stroke-width="1"/><text x="702.6" y="141" clip-path="url(#rclip)" font-size="9.5" text-anchor="middle" fill="#222" font-family="Liberation Sans">65</text><line x1="725.5" y1="148" x2="725.5" y2="155" stroke="#444" stroke-width="1"/><text x="725.1" y="141" clip-path="url(#rclip)" font-size="9.5" text-anchor="middle" fill="#222" font-family="Liberation Sans">66</text><line x1="747.5" y1="148" x2="747.5" y2="155" stroke="#444" stroke-width="1"/><text x="747.6" y="141" clip-path="url(#rclip)" font-size="9.5" text-anchor="middle" fill="#222" font-family="Liberation Sans">67</text><line x1="770.5" y1="148" x2="770.5" y2="155" stroke="#444" stroke-width="1"/><text x="770.1" y="141" clip-path="url(#rclip)" font-size="9.5" text-anchor="middle" fill="#222" font-family="Liberation Sans">68</text><line x1="792.5" y1="148" x2="792.5" y2="155" stroke="#444" stroke-width="1"/><text x="792.6" y="141" clip-path="url(#rclip)" font-size="9.5" text-anchor="middle" fill="#222" font-family="Liberation Sans">69</text><line x1="815.5" y1="148" x2="815.5" y2="155" stroke="#444" stroke-width="1"/><text x="815.1" y="141" clip-path="url(#rclip)" font-size="9.5" text-anchor="middle" fill="#222" font-family="Liberation Sans">70</text><line x1="837.5" y1="148" x2="837.5" y2="155" stroke="#444" stroke-width="1"/><text x="837.7" y="141" clip-path="url(#rclip)" font-size="9.5" text-anchor="middle" fill="#222" font-family="Liberation Sans">71</text><line x1="860.5" y1="148" x2="860.5" y2="155" stroke="#444" stroke-width="1"/><text x="860.2" y="141" clip-path="url(#rclip)" font-size="9.5" text-anchor="middle" fill="#222" font-family="Liberation Sans">72</text><line x1="882.5" y1="148" x2="882.5" y2="155" stroke="#444" stroke-width="1"/><text x="882.7" y="141" clip-path="url(#rclip)" font-size="9.5" text-anchor="middle" fill="#222" font-family="Liberation Sans">73</text><line x1="905.5" y1="148" x2="905.5" y2="155" stroke="#444" stroke-width="1"/><text x="905.2" y="141" clip-path="url(#rclip)" font-size="9.5" text-anchor="middle" fill="#222" font-family="Liberation Sans">74</text><line x1="927.5" y1="148" x2="927.5" y2="155" stroke="#444" stroke-width="1"/><text x="927.7" y="141" clip-path="url(#rclip)" font-size="9.5" text-anchor="middle" fill="#222" font-family="Liberation Sans">75</text><line x1="950.5" y1="148" x2="950.5" y2="155" stroke="#444" stroke-width="1"/><text x="950.2" y="141" clip-path="url(#rclip)" font-size="9.5" text-anchor="middle" fill="#222" font-family="Liberation Sans">76</text><line x1="972.5" y1="148" x2="972.5" y2="155" stroke="#444" stroke-width="1"/><text x="972.7" y="141" clip-path="url(#rclip)" font-size="9.5" text-anchor="middle" fill="#222" font-family="Liberation Sans">77</text><line x1="995.5" y1="148" x2="995.5" y2="155" stroke="#444" stroke-width="1"/><text x="995.2" y="141" clip-path="url(#rclip)" font-size="9.5" text-anchor="middle" fill="#222" font-family="Liberation Sans">78</text><line x1="1017.5" y1="148" x2="1017.5" y2="155" stroke="#444" stroke-width="1"/><text x="1017.7" y="141" clip-path="url(#rclip)" font-size="9.5" text-anchor="middle" fill="#222" font-family="Liberation Sans">79</text><line x1="1040.5" y1="148" x2="1040.5" y2="155" stroke="#444" stroke-width="1"/><text x="1040.2" y="141" clip-path="url(#rclip)" font-size="9.5" text-anchor="middle" fill="#222" font-family="Liberation Sans">80</text><line x1="1062.5" y1="148" x2="1062.5" y2="155" stroke="#444" stroke-width="1"/><text x="1062.7" y="141" clip-path="url(#rclip)" font-size="9.5" text-anchor="middle" fill="#222" font-family="Liberation Sans">81</text><line x1="1085.5" y1="148" x2="1085.5" y2="155" stroke="#444" stroke-width="1"/><text x="1085.2" y="141" clip-path="url(#rclip)" font-size="9.5" text-anchor="middle" fill="#222" font-family="Liberation Sans">82</text><line x1="1107.5" y1="148" x2="1107.5" y2="155" stroke="#444" stroke-width="1"/><text x="1107.7" y="141" clip-path="url(#rclip)" font-size="9.5" text-anchor="middle" fill="#222" font-family="Liberation Sans">83</text><line x1="1130.5" y1="148" x2="1130.5" y2="155" stroke="#444" stroke-width="1"/><text x="1130.2" y="141" clip-path="url(#rclip)" font-size="9.5" text-anchor="middle" fill="#222" font-family="Liberation Sans">84</text><text transform="translate(81.5 729.6) rotate(-90)" font-size="9.5" text-anchor="middle" fill="#222" font-family="Liberation Sans">8</text><line x1="88" y1="709.5" x2="95" y2="709.5" stroke="#444" stroke-width="1"/><text transform="translate(81.5 709.4) rotate(-90)" font-size="9.5" text-anchor="middle" fill="#222" font-family="Liberation Sans">-7</text><line x1="88" y1="686.5" x2="95" y2="686.5" stroke="#444" stroke-width="1"/><text transform="translate(81.5 686.9) rotate(-90)" font-size="9.5" text-anchor="middle" fill="#222" font-family="Liberation Sans">-6</text><line x1="88" y1="664.5" x2="95" y2="664.5" stroke="#444" stroke-width="1"/><text transform="translate(81.5 664.5) rotate(-90)" font-size="9.5" text-anchor="middle" fill="#222" font-family="Liberation Sans">-5</text><line x1="88" y1="641.5" x2="95" y2="641.5" stroke="#444" stroke-width="1"/><text transform="translate(81.5 642.0) rotate(-90)" font-size="9.5" text-anchor="middle" fill="#222" font-family="Liberation Sans">-4</text><line x1="88" y1="619.5" x2="95" y2="619.5" stroke="#444" stroke-width="1"/><text transform="translate(81.5 619.5) rotate(-90)" font-size="9.5" text-anchor="middle" fill="#222" font-family="Liberation Sans">-3</text><line x1="88" y1="596.5" x2="95" y2="596.5" stroke="#444" stroke-width="1"/><text transform="translate(81.5 597.0) rotate(-90)" font-size="9.5" text-anchor="middle" fill="#222" font-family="Liberation Sans">-2</text><line x1="88" y1="574.5" x2="95" y2="574.5" stroke="#444" stroke-width="1"/><text transform="translate(81.5 574.5) rotate(-90)" font-size="9.5" text-anchor="middle" fill="#222" font-family="Liberation Sans">-1</text><line x1="88" y1="552.5" x2="95" y2="552.5" stroke="#444" stroke-width="1"/><text transform="translate(81.5 552.0) rotate(-90)" font-size="9.5" text-anchor="middle" fill="#222" font-family="Liberation Sans">0</text><line x1="88" y1="529.5" x2="95" y2="529.5" stroke="#444" stroke-width="1"/><text transform="translate(81.5 529.5) rotate(-90)" font-size="9.5" text-anchor="middle" fill="#222" font-family="Liberation Sans">1</text><line x1="88" y1="507.5" x2="95" y2="507.5" stroke="#444" stroke-width="1"/><text transform="translate(81.5 507.0) rotate(-90)" font-size="9.5" text-anchor="middle" fill="#222" font-family="Liberation Sans">2</text><line x1="88" y1="484.5" x2="95" y2="484.5" stroke="#444" stroke-width="1"/><text transform="translate(81.5 484.5) rotate(-90)" font-size="9.5" text-anchor="middle" fill="#222" font-family="Liberation Sans">3</text><line x1="88" y1="462.5" x2="95" y2="462.5" stroke="#444" stroke-width="1"/><text transform="translate(81.5 462.0) rotate(-90)" font-size="9.5" text-anchor="middle" fill="#222" font-family="Liberation Sans">4</text><line x1="88" y1="439.5" x2="95" y2="439.5" stroke="#444" stroke-width="1"/><text transform="translate(81.5 439.6) rotate(-90)" font-size="9.5" text-anchor="middle" fill="#222" font-family="Liberation Sans">5</text><line x1="88" y1="417.5" x2="95" y2="417.5" stroke="#444" stroke-width="1"/><text transform="translate(81.5 417.1) rotate(-90)" font-size="9.5" text-anchor="middle" fill="#222" font-family="Liberation Sans">6</text><line x1="88" y1="394.5" x2="95" y2="394.5" stroke="#444" stroke-width="1"/><text transform="translate(81.5 394.6) rotate(-90)" font-size="9.5" text-anchor="middle" fill="#222" font-family="Liberation Sans">7</text><line x1="88" y1="372.5" x2="95" y2="372.5" stroke="#444" stroke-width="1"/><text transform="translate(81.5 372.1) rotate(-90)" font-size="9.5" text-anchor="middle" fill="#222" font-family="Liberation Sans">8</text><line x1="88" y1="349.5" x2="95" y2="349.5" stroke="#444" stroke-width="1"/><text transform="translate(81.5 349.6) rotate(-90)" font-size="9.5" text-anchor="middle" fill="#222" font-family="Liberation Sans">9</text><line x1="88" y1="327.5" x2="95" y2="327.5" stroke="#444" stroke-width="1"/><text transform="translate(81.5 327.1) rotate(-90)" font-size="9.5" text-anchor="middle" fill="#222" font-family="Liberation Sans">10</text><line x1="88" y1="304.5" x2="95" y2="304.5" stroke="#444" stroke-width="1"/><text transform="translate(81.5 304.6) rotate(-90)" font-size="9.5" text-anchor="middle" fill="#222" font-family="Liberation Sans">11</text><line x1="88" y1="282.5" x2="95" y2="282.5" stroke="#444" stroke-width="1"/><text transform="translate(81.5 282.1) rotate(-90)" font-size="9.5" text-anchor="middle" fill="#222" font-family="Liberation Sans">12</text><line x1="88" y1="259.5" x2="95" y2="259.5" stroke="#444" stroke-width="1"/><text transform="translate(81.5 259.6) rotate(-90)" font-size="9.5" text-anchor="middle" fill="#222" font-family="Liberation Sans">13</text><line x1="88" y1="237.5" x2="95" y2="237.5" stroke="#444" stroke-width="1"/><text transform="translate(81.5 237.1) rotate(-90)" font-size="9.5" text-anchor="middle" fill="#222" font-family="Liberation Sans">14</text><line x1="88" y1="214.5" x2="95" y2="214.5" stroke="#444" stroke-width="1"/><text transform="translate(81.5 214.7) rotate(-90)" font-size="9.5" text-anchor="middle" fill="#222" font-family="Liberation Sans">15</text><line x1="88" y1="192.5" x2="95" y2="192.5" stroke="#444" stroke-width="1"/><text transform="translate(81.5 192.2) rotate(-90)" font-size="9.5" text-anchor="middle" fill="#222" font-family="Liberation Sans">16</text><line x1="88" y1="169.5" x2="95" y2="169.5" stroke="#444" stroke-width="1"/><text transform="translate(81.5 169.7) rotate(-90)" font-size="9.5" text-anchor="middle" fill="#222" font-family="Liberation Sans">17</text><path d="M310.1 145 h10 l-5 6z" fill="#000"/><path d="M86 434.1 v10 l6 -5z" fill="#000"/></svg><div id="draw" class="a"></div><svg class="a" style="left:95px;top:155px" width="1044" height="577"><g transform="translate(-95 -155)"><line x1="140.0" y1="155" x2="140.0" y2="732" stroke="#171717" stroke-width="1.6"/><line x1="365.0" y1="155" x2="365.0" y2="732" stroke="#171717" stroke-width="1.6"/><line x1="590.1" y1="155" x2="590.1" y2="732" stroke="#171717" stroke-width="1.6"/><line x1="815.1" y1="155" x2="815.1" y2="732" stroke="#171717" stroke-width="1.6"/><line x1="1040.2" y1="155" x2="1040.2" y2="732" stroke="#171717" stroke-width="1.6"/><line x1="95" y1="552.0" x2="1139" y2="552.0" stroke="#171717" stroke-width="1.6"/><line x1="95" y1="327.1" x2="1139" y2="327.1" stroke="#171717" stroke-width="1.6"/><path d="M117 731h1v1h-1zM117 709h1v1h-1zM117 686h1v1h-1zM117 664h1v1h-1zM117 641h1v1h-1zM117 619h1v1h-1zM117 596h1v1h-1zM117 574h1v1h-1zM117 552h1v1h-1zM117 529h1v1h-1zM117 507h1v1h-1zM117 484h1v1h-1zM117 462h1v1h-1zM117 439h1v1h-1zM117 417h1v1h-1zM117 394h1v1h-1zM117 372h1v1h-1zM117 349h1v1h-1zM117 327h1v1h-1zM117 304h1v1h-1zM117 282h1v1h-1zM117 259h1v1h-1zM117 237h1v1h-1zM117 214h1v1h-1zM117 192h1v1h-1zM117 169h1v1h-1zM140 731h1v1h-1zM140 709h1v1h-1zM140 686h1v1h-1zM140 664h1v1h-1zM140 641h1v1h-1zM140 619h1v1h-1zM140 596h1v1h-1zM140 574h1v1h-1zM140 552h1v1h-1zM140 529h1v1h-1zM140 507h1v1h-1zM140 484h1v1h-1zM140 462h1v1h-1zM140 439h1v1h-1zM140 417h1v1h-1zM140 394h1v1h-1zM140 372h1v1h-1zM140 349h1v1h-1zM140 327h1v1h-1zM140 304h1v1h-1zM140 282h1v1h-1zM140 259h1v1h-1zM140 237h1v1h-1zM140 214h1v1h-1zM140 192h1v1h-1zM140 169h1v1h-1zM162 731h1v1h-1zM162 709h1v1h-1zM162 686h1v1h-1zM162 664h1v1h-1zM162 641h1v1h-1zM162 619h1v1h-1zM162 596h1v1h-1zM162 574h1v1h-1zM162 552h1v1h-1zM162 529h1v1h-1zM162 507h1v1h-1zM162 484h1v1h-1zM162 462h1v1h-1zM162 439h1v1h-1zM162 417h1v1h-1zM162 394h1v1h-1zM162 372h1v1h-1zM162 349h1v1h-1zM162 327h1v1h-1zM162 304h1v1h-1zM162 282h1v1h-1zM162 259h1v1h-1zM162 237h1v1h-1zM162 214h1v1h-1zM162 192h1v1h-1zM162 169h1v1h-1zM185 731h1v1h-1zM185 709h1v1h-1zM185 686h1v1h-1zM185 664h1v1h-1zM185 641h1v1h-1zM185 619h1v1h-1zM185 596h1v1h-1zM185 574h1v1h-1zM185 552h1v1h-1zM185 529h1v1h-1zM185 507h1v1h-1zM185 484h1v1h-1zM185 462h1v1h-1zM185 439h1v1h-1zM185 417h1v1h-1zM185 394h1v1h-1zM185 372h1v1h-1zM185 349h1v1h-1zM185 327h1v1h-1zM185 304h1v1h-1zM185 282h1v1h-1zM185 259h1v1h-1zM185 237h1v1h-1zM185 214h1v1h-1zM185 192h1v1h-1zM185 169h1v1h-1zM207 731h1v1h-1zM207 709h1v1h-1zM207 686h1v1h-1zM207 664h1v1h-1zM207 641h1v1h-1zM207 619h1v1h-1zM207 596h1v1h-1zM207 574h1v1h-1zM207 552h1v1h-1zM207 529h1v1h-1zM207 507h1v1h-1zM207 484h1v1h-1zM207 462h1v1h-1zM207 439h1v1h-1zM207 417h1v1h-1zM207 394h1v1h-1zM207 372h1v1h-1zM207 349h1v1h-1zM207 327h1v1h-1zM207 304h1v1h-1zM207 282h1v1h-1zM207 259h1v1h-1zM207 237h1v1h-1zM207 214h1v1h-1zM207 192h1v1h-1zM207 169h1v1h-1zM230 731h1v1h-1zM230 709h1v1h-1zM230 686h1v1h-1zM230 664h1v1h-1zM230 641h1v1h-1zM230 619h1v1h-1zM230 596h1v1h-1zM230 574h1v1h-1zM230 552h1v1h-1zM230 529h1v1h-1zM230 507h1v1h-1zM230 484h1v1h-1zM230 462h1v1h-1zM230 439h1v1h-1zM230 417h1v1h-1zM230 394h1v1h-1zM230 372h1v1h-1zM230 349h1v1h-1zM230 327h1v1h-1zM230 304h1v1h-1zM230 282h1v1h-1zM230 259h1v1h-1zM230 237h1v1h-1zM230 214h1v1h-1zM230 192h1v1h-1zM230 169h1v1h-1zM252 731h1v1h-1zM252 709h1v1h-1zM252 686h1v1h-1zM252 664h1v1h-1zM252 641h1v1h-1zM252 619h1v1h-1zM252 596h1v1h-1zM252 574h1v1h-1zM252 552h1v1h-1zM252 529h1v1h-1zM252 507h1v1h-1zM252 484h1v1h-1zM252 462h1v1h-1zM252 439h1v1h-1zM252 417h1v1h-1zM252 394h1v1h-1zM252 372h1v1h-1zM252 349h1v1h-1zM252 327h1v1h-1zM252 304h1v1h-1zM252 282h1v1h-1zM252 259h1v1h-1zM252 237h1v1h-1zM252 214h1v1h-1zM252 192h1v1h-1zM252 169h1v1h-1zM275 731h1v1h-1zM275 709h1v1h-1zM275 686h1v1h-1zM275 664h1v1h-1zM275 641h1v1h-1zM275 619h1v1h-1zM275 596h1v1h-1zM275 574h1v1h-1zM275 552h1v1h-1zM275 529h1v1h-1zM275 507h1v1h-1zM275 484h1v1h-1zM275 462h1v1h-1zM275 439h1v1h-1zM275 417h1v1h-1zM275 394h1v1h-1zM275 372h1v1h-1zM275 349h1v1h-1zM275 327h1v1h-1zM275 304h1v1h-1zM275 282h1v1h-1zM275 259h1v1h-1zM275 237h1v1h-1zM275 214h1v1h-1zM275 192h1v1h-1zM275 169h1v1h-1zM297 731h1v1h-1zM297 709h1v1h-1zM297 686h1v1h-1zM297 664h1v1h-1zM297 641h1v1h-1zM297 619h1v1h-1zM297 596h1v1h-1zM297 574h1v1h-1zM297 552h1v1h-1zM297 529h1v1h-1zM297 507h1v1h-1zM297 484h1v1h-1zM297 462h1v1h-1zM297 439h1v1h-1zM297 417h1v1h-1zM297 394h1v1h-1zM297 372h1v1h-1zM297 349h1v1h-1zM297 327h1v1h-1zM297 304h1v1h-1zM297 282h1v1h-1zM297 259h1v1h-1zM297 237h1v1h-1zM297 214h1v1h-1zM297 192h1v1h-1zM297 169h1v1h-1zM320 731h1v1h-1zM320 709h1v1h-1zM320 686h1v1h-1zM320 664h1v1h-1zM320 641h1v1h-1zM320 619h1v1h-1zM320 596h1v1h-1zM320 574h1v1h-1zM320 552h1v1h-1zM320 529h1v1h-1zM320 507h1v1h-1zM320 484h1v1h-1zM320 462h1v1h-1zM320 439h1v1h-1zM320 417h1v1h-1zM320 394h1v1h-1zM320 372h1v1h-1zM320 349h1v1h-1zM320 327h1v1h-1zM320 304h1v1h-1zM320 282h1v1h-1zM320 259h1v1h-1zM320 237h1v1h-1zM320 214h1v1h-1zM320 192h1v1h-1zM320 169h1v1h-1zM342 731h1v1h-1zM342 709h1v1h-1zM342 686h1v1h-1zM342 664h1v1h-1zM342 641h1v1h-1zM342 619h1v1h-1zM342 596h1v1h-1zM342 574h1v1h-1zM342 552h1v1h-1zM342 529h1v1h-1zM342 507h1v1h-1zM342 484h1v1h-1zM342 462h1v1h-1zM342 439h1v1h-1zM342 417h1v1h-1zM342 394h1v1h-1zM342 372h1v1h-1zM342 349h1v1h-1zM342 327h1v1h-1zM342 304h1v1h-1zM342 282h1v1h-1zM342 259h1v1h-1zM342 237h1v1h-1zM342 214h1v1h-1zM342 192h1v1h-1zM342 169h1v1h-1zM365 731h1v1h-1zM365 709h1v1h-1zM365 686h1v1h-1zM365 664h1v1h-1zM365 641h1v1h-1zM365 619h1v1h-1zM365 596h1v1h-1zM365 574h1v1h-1zM365 552h1v1h-1zM365 529h1v1h-1zM365 507h1v1h-1zM365 484h1v1h-1zM365 462h1v1h-1zM365 439h1v1h-1zM365 417h1v1h-1zM365 394h1v1h-1zM365 372h1v1h-1zM365 349h1v1h-1zM365 327h1v1h-1zM365 304h1v1h-1zM365 282h1v1h-1zM365 259h1v1h-1zM365 237h1v1h-1zM365 214h1v1h-1zM365 192h1v1h-1zM365 169h1v1h-1zM387 731h1v1h-1zM387 709h1v1h-1zM387 686h1v1h-1zM387 664h1v1h-1zM387 641h1v1h-1zM387 619h1v1h-1zM387 596h1v1h-1zM387 574h1v1h-1zM387 552h1v1h-1zM387 529h1v1h-1zM387 507h1v1h-1zM387 484h1v1h-1zM387 462h1v1h-1zM387 439h1v1h-1zM387 417h1v1h-1zM387 394h1v1h-1zM387 372h1v1h-1zM387 349h1v1h-1zM387 327h1v1h-1zM387 304h1v1h-1zM387 282h1v1h-1zM387 259h1v1h-1zM387 237h1v1h-1zM387 214h1v1h-1zM387 192h1v1h-1zM387 169h1v1h-1zM410 731h1v1h-1zM410 709h1v1h-1zM410 686h1v1h-1zM410 664h1v1h-1zM410 641h1v1h-1zM410 619h1v1h-1zM410 596h1v1h-1zM410 574h1v1h-1zM410 552h1v1h-1zM410 529h1v1h-1zM410 507h1v1h-1zM410 484h1v1h-1zM410 462h1v1h-1zM410 439h1v1h-1zM410 417h1v1h-1zM410 394h1v1h-1zM410 372h1v1h-1zM410 349h1v1h-1zM410 327h1v1h-1zM410 304h1v1h-1zM410 282h1v1h-1zM410 259h1v1h-1zM410 237h1v1h-1zM410 214h1v1h-1zM410 192h1v1h-1zM410 169h1v1h-1zM432 731h1v1h-1zM432 709h1v1h-1zM432 686h1v1h-1zM432 664h1v1h-1zM432 641h1v1h-1zM432 619h1v1h-1zM432 596h1v1h-1zM432 574h1v1h-1zM432 552h1v1h-1zM432 529h1v1h-1zM432 507h1v1h-1zM432 484h1v1h-1zM432 462h1v1h-1zM432 439h1v1h-1zM432 417h1v1h-1zM432 394h1v1h-1zM432 372h1v1h-1zM432 349h1v1h-1zM432 327h1v1h-1zM432 304h1v1h-1zM432 282h1v1h-1zM432 259h1v1h-1zM432 237h1v1h-1zM432 214h1v1h-1zM432 192h1v1h-1zM432 169h1v1h-1zM455 731h1v1h-1zM455 709h1v1h-1zM455 686h1v1h-1zM455 664h1v1h-1zM455 641h1v1h-1zM455 619h1v1h-1zM455 596h1v1h-1zM455 574h1v1h-1zM455 552h1v1h-1zM455 529h1v1h-1zM455 507h1v1h-1zM455 484h1v1h-1zM455 462h1v1h-1zM455 439h1v1h-1zM455 417h1v1h-1zM455 394h1v1h-1zM455 372h1v1h-1zM455 349h1v1h-1zM455 327h1v1h-1zM455 304h1v1h-1zM455 282h1v1h-1zM455 259h1v1h-1zM455 237h1v1h-1zM455 214h1v1h-1zM455 192h1v1h-1zM455 169h1v1h-1zM477 731h1v1h-1zM477 709h1v1h-1zM477 686h1v1h-1zM477 664h1v1h-1zM477 641h1v1h-1zM477 619h1v1h-1zM477 596h1v1h-1zM477 574h1v1h-1zM477 552h1v1h-1zM477 529h1v1h-1zM477 507h1v1h-1zM477 484h1v1h-1zM477 462h1v1h-1zM477 439h1v1h-1zM477 417h1v1h-1zM477 394h1v1h-1zM477 372h1v1h-1zM477 349h1v1h-1zM477 327h1v1h-1zM477 304h1v1h-1zM477 282h1v1h-1zM477 259h1v1h-1zM477 237h1v1h-1zM477 214h1v1h-1zM477 192h1v1h-1zM477 169h1v1h-1zM500 731h1v1h-1zM500 709h1v1h-1zM500 686h1v1h-1zM500 664h1v1h-1zM500 641h1v1h-1zM500 619h1v1h-1zM500 596h1v1h-1zM500 574h1v1h-1zM500 552h1v1h-1zM500 529h1v1h-1zM500 507h1v1h-1zM500 484h1v1h-1zM500 462h1v1h-1zM500 439h1v1h-1zM500 417h1v1h-1zM500 394h1v1h-1zM500 372h1v1h-1zM500 349h1v1h-1zM500 327h1v1h-1zM500 304h1v1h-1zM500 282h1v1h-1zM500 259h1v1h-1zM500 237h1v1h-1zM500 214h1v1h-1zM500 192h1v1h-1zM500 169h1v1h-1zM522 731h1v1h-1zM522 709h1v1h-1zM522 686h1v1h-1zM522 664h1v1h-1zM522 641h1v1h-1zM522 619h1v1h-1zM522 596h1v1h-1zM522 574h1v1h-1zM522 552h1v1h-1zM522 529h1v1h-1zM522 507h1v1h-1zM522 484h1v1h-1zM522 462h1v1h-1zM522 439h1v1h-1zM522 417h1v1h-1zM522 394h1v1h-1zM522 372h1v1h-1zM522 349h1v1h-1zM522 327h1v1h-1zM522 304h1v1h-1zM522 282h1v1h-1zM522 259h1v1h-1zM522 237h1v1h-1zM522 214h1v1h-1zM522 192h1v1h-1zM522 169h1v1h-1zM545 731h1v1h-1zM545 709h1v1h-1zM545 686h1v1h-1zM545 664h1v1h-1zM545 641h1v1h-1zM545 619h1v1h-1zM545 596h1v1h-1zM545 574h1v1h-1zM545 552h1v1h-1zM545 529h1v1h-1zM545 507h1v1h-1zM545 484h1v1h-1zM545 462h1v1h-1zM545 439h1v1h-1zM545 417h1v1h-1zM545 394h1v1h-1zM545 372h1v1h-1zM545 349h1v1h-1zM545 327h1v1h-1zM545 304h1v1h-1zM545 282h1v1h-1zM545 259h1v1h-1zM545 237h1v1h-1zM545 214h1v1h-1zM545 192h1v1h-1zM545 169h1v1h-1zM567 731h1v1h-1zM567 709h1v1h-1zM567 686h1v1h-1zM567 664h1v1h-1zM567 641h1v1h-1zM567 619h1v1h-1zM567 596h1v1h-1zM567 574h1v1h-1zM567 552h1v1h-1zM567 529h1v1h-1zM567 507h1v1h-1zM567 484h1v1h-1zM567 462h1v1h-1zM567 439h1v1h-1zM567 417h1v1h-1zM567 394h1v1h-1zM567 372h1v1h-1zM567 349h1v1h-1zM567 327h1v1h-1zM567 304h1v1h-1zM567 282h1v1h-1zM567 259h1v1h-1zM567 237h1v1h-1zM567 214h1v1h-1zM567 192h1v1h-1zM567 169h1v1h-1zM590 731h1v1h-1zM590 709h1v1h-1zM590 686h1v1h-1zM590 664h1v1h-1zM590 641h1v1h-1zM590 619h1v1h-1zM590 596h1v1h-1zM590 574h1v1h-1zM590 552h1v1h-1zM590 529h1v1h-1zM590 507h1v1h-1zM590 484h1v1h-1zM590 462h1v1h-1zM590 439h1v1h-1zM590 417h1v1h-1zM590 394h1v1h-1zM590 372h1v1h-1zM590 349h1v1h-1zM590 327h1v1h-1zM590 304h1v1h-1zM590 282h1v1h-1zM590 259h1v1h-1zM590 237h1v1h-1zM590 214h1v1h-1zM590 192h1v1h-1zM590 169h1v1h-1zM612 731h1v1h-1zM612 709h1v1h-1zM612 686h1v1h-1zM612 664h1v1h-1zM612 641h1v1h-1zM612 619h1v1h-1zM612 596h1v1h-1zM612 574h1v1h-1zM612 552h1v1h-1zM612 529h1v1h-1zM612 507h1v1h-1zM612 484h1v1h-1zM612 462h1v1h-1zM612 439h1v1h-1zM612 417h1v1h-1zM612 394h1v1h-1zM612 372h1v1h-1zM612 349h1v1h-1zM612 327h1v1h-1zM612 304h1v1h-1zM612 282h1v1h-1zM612 259h1v1h-1zM612 237h1v1h-1zM612 214h1v1h-1zM612 192h1v1h-1zM612 169h1v1h-1zM635 731h1v1h-1zM635 709h1v1h-1zM635 686h1v1h-1zM635 664h1v1h-1zM635 641h1v1h-1zM635 619h1v1h-1zM635 596h1v1h-1zM635 574h1v1h-1zM635 552h1v1h-1zM635 529h1v1h-1zM635 507h1v1h-1zM635 484h1v1h-1zM635 462h1v1h-1zM635 439h1v1h-1zM635 417h1v1h-1zM635 394h1v1h-1zM635 372h1v1h-1zM635 349h1v1h-1zM635 327h1v1h-1zM635 304h1v1h-1zM635 282h1v1h-1zM635 259h1v1h-1zM635 237h1v1h-1zM635 214h1v1h-1zM635 192h1v1h-1zM635 169h1v1h-1zM657 731h1v1h-1zM657 709h1v1h-1zM657 686h1v1h-1zM657 664h1v1h-1zM657 641h1v1h-1zM657 619h1v1h-1zM657 596h1v1h-1zM657 574h1v1h-1zM657 552h1v1h-1zM657 529h1v1h-1zM657 507h1v1h-1zM657 484h1v1h-1zM657 462h1v1h-1zM657 439h1v1h-1zM657 417h1v1h-1zM657 394h1v1h-1zM657 372h1v1h-1zM657 349h1v1h-1zM657 327h1v1h-1zM657 304h1v1h-1zM657 282h1v1h-1zM657 259h1v1h-1zM657 237h1v1h-1zM657 214h1v1h-1zM657 192h1v1h-1zM657 169h1v1h-1zM680 731h1v1h-1zM680 709h1v1h-1zM680 686h1v1h-1zM680 664h1v1h-1zM680 641h1v1h-1zM680 619h1v1h-1zM680 596h1v1h-1zM680 574h1v1h-1zM680 552h1v1h-1zM680 529h1v1h-1zM680 507h1v1h-1zM680 484h1v1h-1zM680 462h1v1h-1zM680 439h1v1h-1zM680 417h1v1h-1zM680 394h1v1h-1zM680 372h1v1h-1zM680 349h1v1h-1zM680 327h1v1h-1zM680 304h1v1h-1zM680 282h1v1h-1zM680 259h1v1h-1zM680 237h1v1h-1zM680 214h1v1h-1zM680 192h1v1h-1zM680 169h1v1h-1zM702 731h1v1h-1zM702 709h1v1h-1zM702 686h1v1h-1zM702 664h1v1h-1zM702 641h1v1h-1zM702 619h1v1h-1zM702 596h1v1h-1zM702 574h1v1h-1zM702 552h1v1h-1zM702 529h1v1h-1zM702 507h1v1h-1zM702 484h1v1h-1zM702 462h1v1h-1zM702 439h1v1h-1zM702 417h1v1h-1zM702 394h1v1h-1zM702 372h1v1h-1zM702 349h1v1h-1zM702 327h1v1h-1zM702 304h1v1h-1zM702 282h1v1h-1zM702 259h1v1h-1zM702 237h1v1h-1zM702 214h1v1h-1zM702 192h1v1h-1zM702 169h1v1h-1zM725 731h1v1h-1zM725 709h1v1h-1zM725 686h1v1h-1zM725 664h1v1h-1zM725 641h1v1h-1zM725 619h1v1h-1zM725 596h1v1h-1zM725 574h1v1h-1zM725 552h1v1h-1zM725 529h1v1h-1zM725 507h1v1h-1zM725 484h1v1h-1zM725 462h1v1h-1zM725 439h1v1h-1zM725 417h1v1h-1zM725 394h1v1h-1zM725 372h1v1h-1zM725 349h1v1h-1zM725 327h1v1h-1zM725 304h1v1h-1zM725 282h1v1h-1zM725 259h1v1h-1zM725 237h1v1h-1zM725 214h1v1h-1zM725 192h1v1h-1zM725 169h1v1h-1zM747 731h1v1h-1zM747 709h1v1h-1zM747 686h1v1h-1zM747 664h1v1h-1zM747 641h1v1h-1zM747 619h1v1h-1zM747 596h1v1h-1zM747 574h1v1h-1zM747 552h1v1h-1zM747 529h1v1h-1zM747 507h1v1h-1zM747 484h1v1h-1zM747 462h1v1h-1zM747 439h1v1h-1zM747 417h1v1h-1zM747 394h1v1h-1zM747 372h1v1h-1zM747 349h1v1h-1zM747 327h1v1h-1zM747 304h1v1h-1zM747 282h1v1h-1zM747 259h1v1h-1zM747 237h1v1h-1zM747 214h1v1h-1zM747 192h1v1h-1zM747 169h1v1h-1zM770 731h1v1h-1zM770 709h1v1h-1zM770 686h1v1h-1zM770 664h1v1h-1zM770 641h1v1h-1zM770 619h1v1h-1zM770 596h1v1h-1zM770 574h1v1h-1zM770 552h1v1h-1zM770 529h1v1h-1zM770 507h1v1h-1zM770 484h1v1h-1zM770 462h1v1h-1zM770 439h1v1h-1zM770 417h1v1h-1zM770 394h1v1h-1zM770 372h1v1h-1zM770 349h1v1h-1zM770 327h1v1h-1zM770 304h1v1h-1zM770 282h1v1h-1zM770 259h1v1h-1zM770 237h1v1h-1zM770 214h1v1h-1zM770 192h1v1h-1zM770 169h1v1h-1zM792 731h1v1h-1zM792 709h1v1h-1zM792 686h1v1h-1zM792 664h1v1h-1zM792 641h1v1h-1zM792 619h1v1h-1zM792 596h1v1h-1zM792 574h1v1h-1zM792 552h1v1h-1zM792 529h1v1h-1zM792 507h1v1h-1zM792 484h1v1h-1zM792 462h1v1h-1zM792 439h1v1h-1zM792 417h1v1h-1zM792 394h1v1h-1zM792 372h1v1h-1zM792 349h1v1h-1zM792 327h1v1h-1zM792 304h1v1h-1zM792 282h1v1h-1zM792 259h1v1h-1zM792 237h1v1h-1zM792 214h1v1h-1zM792 192h1v1h-1zM792 169h1v1h-1zM815 731h1v1h-1zM815 709h1v1h-1zM815 686h1v1h-1zM815 664h1v1h-1zM815 641h1v1h-1zM815 619h1v1h-1zM815 596h1v1h-1zM815 574h1v1h-1zM815 552h1v1h-1zM815 529h1v1h-1zM815 507h1v1h-1zM815 484h1v1h-1zM815 462h1v1h-1zM815 439h1v1h-1zM815 417h1v1h-1zM815 394h1v1h-1zM815 372h1v1h-1zM815 349h1v1h-1zM815 327h1v1h-1zM815 304h1v1h-1zM815 282h1v1h-1zM815 259h1v1h-1zM815 237h1v1h-1zM815 214h1v1h-1zM815 192h1v1h-1zM815 169h1v1h-1zM837 731h1v1h-1zM837 709h1v1h-1zM837 686h1v1h-1zM837 664h1v1h-1zM837 641h1v1h-1zM837 619h1v1h-1zM837 596h1v1h-1zM837 574h1v1h-1zM837 552h1v1h-1zM837 529h1v1h-1zM837 507h1v1h-1zM837 484h1v1h-1zM837 462h1v1h-1zM837 439h1v1h-1zM837 417h1v1h-1zM837 394h1v1h-1zM837 372h1v1h-1zM837 349h1v1h-1zM837 327h1v1h-1zM837 304h1v1h-1zM837 282h1v1h-1zM837 259h1v1h-1zM837 237h1v1h-1zM837 214h1v1h-1zM837 192h1v1h-1zM837 169h1v1h-1zM860 731h1v1h-1zM860 709h1v1h-1zM860 686h1v1h-1zM860 664h1v1h-1zM860 641h1v1h-1zM860 619h1v1h-1zM860 596h1v1h-1zM860 574h1v1h-1zM860 552h1v1h-1zM860 529h1v1h-1zM860 507h1v1h-1zM860 484h1v1h-1zM860 462h1v1h-1zM860 439h1v1h-1zM860 417h1v1h-1zM860 394h1v1h-1zM860 372h1v1h-1zM860 349h1v1h-1zM860 327h1v1h-1zM860 304h1v1h-1zM860 282h1v1h-1zM860 259h1v1h-1zM860 237h1v1h-1zM860 214h1v1h-1zM860 192h1v1h-1zM860 169h1v1h-1zM882 731h1v1h-1zM882 709h1v1h-1zM882 686h1v1h-1zM882 664h1v1h-1zM882 641h1v1h-1zM882 619h1v1h-1zM882 596h1v1h-1zM882 574h1v1h-1zM882 552h1v1h-1zM882 529h1v1h-1zM882 507h1v1h-1zM882 484h1v1h-1zM882 462h1v1h-1zM882 439h1v1h-1zM882 417h1v1h-1zM882 394h1v1h-1zM882 372h1v1h-1zM882 349h1v1h-1zM882 327h1v1h-1zM882 304h1v1h-1zM882 282h1v1h-1zM882 259h1v1h-1zM882 237h1v1h-1zM882 214h1v1h-1zM882 192h1v1h-1zM882 169h1v1h-1zM905 731h1v1h-1zM905 709h1v1h-1zM905 686h1v1h-1zM905 664h1v1h-1zM905 641h1v1h-1zM905 619h1v1h-1zM905 596h1v1h-1zM905 574h1v1h-1zM905 552h1v1h-1zM905 529h1v1h-1zM905 507h1v1h-1zM905 484h1v1h-1zM905 462h1v1h-1zM905 439h1v1h-1zM905 417h1v1h-1zM905 394h1v1h-1zM905 372h1v1h-1zM905 349h1v1h-1zM905 327h1v1h-1zM905 304h1v1h-1zM905 282h1v1h-1zM905 259h1v1h-1zM905 237h1v1h-1zM905 214h1v1h-1zM905 192h1v1h-1zM905 169h1v1h-1zM927 731h1v1h-1zM927 709h1v1h-1zM927 686h1v1h-1zM927 664h1v1h-1zM927 641h1v1h-1zM927 619h1v1h-1zM927 596h1v1h-1zM927 574h1v1h-1zM927 552h1v1h-1zM927 529h1v1h-1zM927 507h1v1h-1zM927 484h1v1h-1zM927 462h1v1h-1zM927 439h1v1h-1zM927 417h1v1h-1zM927 394h1v1h-1zM927 372h1v1h-1zM927 349h1v1h-1zM927 327h1v1h-1zM927 304h1v1h-1zM927 282h1v1h-1zM927 259h1v1h-1zM927 237h1v1h-1zM927 214h1v1h-1zM927 192h1v1h-1zM927 169h1v1h-1zM950 731h1v1h-1zM950 709h1v1h-1zM950 686h1v1h-1zM950 664h1v1h-1zM950 641h1v1h-1zM950 619h1v1h-1zM950 596h1v1h-1zM950 574h1v1h-1zM950 552h1v1h-1zM950 529h1v1h-1zM950 507h1v1h-1zM950 484h1v1h-1zM950 462h1v1h-1zM950 439h1v1h-1zM950 417h1v1h-1zM950 394h1v1h-1zM950 372h1v1h-1zM950 349h1v1h-1zM950 327h1v1h-1zM950 304h1v1h-1zM950 282h1v1h-1zM950 259h1v1h-1zM950 237h1v1h-1zM950 214h1v1h-1zM950 192h1v1h-1zM950 169h1v1h-1zM972 731h1v1h-1zM972 709h1v1h-1zM972 686h1v1h-1zM972 664h1v1h-1zM972 641h1v1h-1zM972 619h1v1h-1zM972 596h1v1h-1zM972 574h1v1h-1zM972 552h1v1h-1zM972 529h1v1h-1zM972 507h1v1h-1zM972 484h1v1h-1zM972 462h1v1h-1zM972 439h1v1h-1zM972 417h1v1h-1zM972 394h1v1h-1zM972 372h1v1h-1zM972 349h1v1h-1zM972 327h1v1h-1zM972 304h1v1h-1zM972 282h1v1h-1zM972 259h1v1h-1zM972 237h1v1h-1zM972 214h1v1h-1zM972 192h1v1h-1zM972 169h1v1h-1zM995 731h1v1h-1zM995 709h1v1h-1zM995 686h1v1h-1zM995 664h1v1h-1zM995 641h1v1h-1zM995 619h1v1h-1zM995 596h1v1h-1zM995 574h1v1h-1zM995 552h1v1h-1zM995 529h1v1h-1zM995 507h1v1h-1zM995 484h1v1h-1zM995 462h1v1h-1zM995 439h1v1h-1zM995 417h1v1h-1zM995 394h1v1h-1zM995 372h1v1h-1zM995 349h1v1h-1zM995 327h1v1h-1zM995 304h1v1h-1zM995 282h1v1h-1zM995 259h1v1h-1zM995 237h1v1h-1zM995 214h1v1h-1zM995 192h1v1h-1zM995 169h1v1h-1zM1017 731h1v1h-1zM1017 709h1v1h-1zM1017 686h1v1h-1zM1017 664h1v1h-1zM1017 641h1v1h-1zM1017 619h1v1h-1zM1017 596h1v1h-1zM1017 574h1v1h-1zM1017 552h1v1h-1zM1017 529h1v1h-1zM1017 507h1v1h-1zM1017 484h1v1h-1zM1017 462h1v1h-1zM1017 439h1v1h-1zM1017 417h1v1h-1zM1017 394h1v1h-1zM1017 372h1v1h-1zM1017 349h1v1h-1zM1017 327h1v1h-1zM1017 304h1v1h-1zM1017 282h1v1h-1zM1017 259h1v1h-1zM1017 237h1v1h-1zM1017 214h1v1h-1zM1017 192h1v1h-1zM1017 169h1v1h-1zM1040 731h1v1h-1zM1040 709h1v1h-1zM1040 686h1v1h-1zM1040 664h1v1h-1zM1040 641h1v1h-1zM1040 619h1v1h-1zM1040 596h1v1h-1zM1040 574h1v1h-1zM1040 552h1v1h-1zM1040 529h1v1h-1zM1040 507h1v1h-1zM1040 484h1v1h-1zM1040 462h1v1h-1zM1040 439h1v1h-1zM1040 417h1v1h-1zM1040 394h1v1h-1zM1040 372h1v1h-1zM1040 349h1v1h-1zM1040 327h1v1h-1zM1040 304h1v1h-1zM1040 282h1v1h-1zM1040 259h1v1h-1zM1040 237h1v1h-1zM1040 214h1v1h-1zM1040 192h1v1h-1zM1040 169h1v1h-1zM1062 731h1v1h-1zM1062 709h1v1h-1zM1062 686h1v1h-1zM1062 664h1v1h-1zM1062 641h1v1h-1zM1062 619h1v1h-1zM1062 596h1v1h-1zM1062 574h1v1h-1zM1062 552h1v1h-1zM1062 529h1v1h-1zM1062 507h1v1h-1zM1062 484h1v1h-1zM1062 462h1v1h-1zM1062 439h1v1h-1zM1062 417h1v1h-1zM1062 394h1v1h-1zM1062 372h1v1h-1zM1062 349h1v1h-1zM1062 327h1v1h-1zM1062 304h1v1h-1zM1062 282h1v1h-1zM1062 259h1v1h-1zM1062 237h1v1h-1zM1062 214h1v1h-1zM1062 192h1v1h-1zM1062 169h1v1h-1zM1085 731h1v1h-1zM1085 709h1v1h-1zM1085 686h1v1h-1zM1085 664h1v1h-1zM1085 641h1v1h-1zM1085 619h1v1h-1zM1085 596h1v1h-1zM1085 574h1v1h-1zM1085 552h1v1h-1zM1085 529h1v1h-1zM1085 507h1v1h-1zM1085 484h1v1h-1zM1085 462h1v1h-1zM1085 439h1v1h-1zM1085 417h1v1h-1zM1085 394h1v1h-1zM1085 372h1v1h-1zM1085 349h1v1h-1zM1085 327h1v1h-1zM1085 304h1v1h-1zM1085 282h1v1h-1zM1085 259h1v1h-1zM1085 237h1v1h-1zM1085 214h1v1h-1zM1085 192h1v1h-1zM1085 169h1v1h-1zM1107 731h1v1h-1zM1107 709h1v1h-1zM1107 686h1v1h-1zM1107 664h1v1h-1zM1107 641h1v1h-1zM1107 619h1v1h-1zM1107 596h1v1h-1zM1107 574h1v1h-1zM1107 552h1v1h-1zM1107 529h1v1h-1zM1107 507h1v1h-1zM1107 484h1v1h-1zM1107 462h1v1h-1zM1107 439h1v1h-1zM1107 417h1v1h-1zM1107 394h1v1h-1zM1107 372h1v1h-1zM1107 349h1v1h-1zM1107 327h1v1h-1zM1107 304h1v1h-1zM1107 282h1v1h-1zM1107 259h1v1h-1zM1107 237h1v1h-1zM1107 214h1v1h-1zM1107 192h1v1h-1zM1107 169h1v1h-1zM1130 731h1v1h-1zM1130 709h1v1h-1zM1130 686h1v1h-1zM1130 664h1v1h-1zM1130 641h1v1h-1zM1130 619h1v1h-1zM1130 596h1v1h-1zM1130 574h1v1h-1zM1130 552h1v1h-1zM1130 529h1v1h-1zM1130 507h1v1h-1zM1130 484h1v1h-1zM1130 462h1v1h-1zM1130 439h1v1h-1zM1130 417h1v1h-1zM1130 394h1v1h-1zM1130 372h1v1h-1zM1130 349h1v1h-1zM1130 327h1v1h-1zM1130 304h1v1h-1zM1130 282h1v1h-1zM1130 259h1v1h-1zM1130 237h1v1h-1zM1130 214h1v1h-1zM1130 192h1v1h-1zM1130 169h1v1h-1z" fill="#404040"/><line x1="275.0" y1="552.0" x2="365.0" y2="327.1" stroke="#bdbdbd" stroke-width="1.3"/><line x1="264.4" y1="547.5" x2="354.6" y2="322.2" stroke="#ff0000" stroke-width="1.4"/><path d="M500.9 327 A145.6 145.6 0 0 0 410 552" fill="none" stroke="#fff" stroke-width="1.25"/><circle cx="612.6" cy="439.6" r="112.4" fill="none" stroke="#fff" stroke-width="1.25"/><ellipse cx="815.1" cy="439.6" rx="36" ry="112.4" fill="none" stroke="#fff" stroke-width="1.25"/><path d="M995.5 327 C992.2 329.8 980.9 337.5 975.5 343.9 C970.1 350.3 966.3 357.7 963.2 365.4 C960.1 373.1 958.1 381.8 957 390 C955.9 398.2 956.1 404.9 956.4 414.7 C956.7 424.4 958.1 438.2 958.6 448.5 C959.1 458.8 959.8 468.1 959.5 476.3 C959.2 484.5 958.7 491.1 957 497.8 C955.3 504.5 953.4 510.1 949.3 516.3 C945.2 522.5 939.8 528.9 932.4 534.8 C925.0 540.7 909.3 548.9 904.7 551.7" fill="none" stroke="#fff" stroke-width="1.25"/><defs><radialGradient id="ring" cx="315" cy="439" r="40" gradientUnits="userSpaceOnUse"><stop offset="0" stop-color="#000" stop-opacity="0"/><stop offset=".77" stop-color="#000" stop-opacity="0"/><stop offset=".84" stop-color="#34404a" stop-opacity=".8"/><stop offset=".9" stop-color="#56646f" stop-opacity=".85"/><stop offset=".95" stop-color="#71808c" stop-opacity=".9"/><stop offset=".98" stop-color="#5b6a76" stop-opacity=".8"/><stop offset="1" stop-color="#000" stop-opacity="0"/></radialGradient></defs><circle cx="315" cy="439" r="40" fill="url(#ring)"/><rect x="299" y="437" width="32" height="3.5" fill="#bdbdbd"/><rect x="313.2" y="423" width="3.5" height="32" fill="#bdbdbd"/><circle cx="315" cy="439" r="1.8" fill="#000"/></g></svg><div id="vscroll" class="a"></div><div class="a" style="left:1143px;top:285px;width:8px;height:320px;background:#7d7d7d;border-radius:4px"></div><div id="hscroll" class="a"></div><div class="a" style="left:243px;top:735.5px;width:684px;height:8px;background:#7d7d7d;border-radius:4px"></div><div id="zoomlbl" class="a"></div><div class="t" style="left:1118.5px;top:735px;font-size:12px;color:#111">1 &lt; 10</div><div id="cmdhist" class="a"></div><div class="t" style="left:77px;top:751.5px;font-size:13.5px;color:#1a1ad0"><i>Comando:</i> offset</div><div class="a" style="left:1138.5px;top:750px;width:14.5px;height:19.5px;background:#f6f6f6"></div><div class="a" style="left:1142px;top:750px;width:8px;height:17px;background:#8a8a8a;border-radius:4px"></div><div id="cmdrow" class="a"></div><div class="t" style="left:73px;top:778.5px;font-size:13.2px;color:#111">Scegli linea, arco, cerchio, ellisse, spline o polilinea:</div><div class="a" style="left:380px;top:775.5px;width:746.5px;height:19px;background:#fff"></div><div class="a" style="left:1127px;top:772px;width:26px;height:26px;background:linear-gradient(#ececec,#f4f4f4);border:1px solid #b5b5b5"></div><div class="a" style="left:1133px;top:780px;width:14px;height:10px;border:1px solid #555;border-top:3px solid #000;background:#eee"></div><div class="a" style="left:1143px;top:780.5px;width:1.5px;height:1.5px;background:#999"></div><svg class="a" style="left:0;top:0" width="72" height="798"><g transform="translate(1.5 156)"><path d="M5.3 6 L5.3 26.7 L12.8 26.7Z" fill="none" stroke="#555" stroke-width="1.1" stroke-linejoin="miter"/><path d="M19.9 6 L19.9 26.7 L28.4 26.7Z" fill="none" stroke="#f04040" stroke-width="1.1" stroke-linejoin="miter"/><path d="M8.5 15.399999999999999 H17.5 V13.399999999999999 L21.5 16.9 L17.5 20.4 V18.4 H8.5Z" fill="#fff" stroke="#5a5aff" stroke-width=".8"/></g><g transform="translate(36.8 156)"><path d="M5 15 L5 27.5 L13 27.5Z" fill="none" stroke="#555" stroke-width="1.1" stroke-linejoin="miter"/><path d="M14.8 12.4 L26.4 4.8 L26.4 12.4Z" fill="none" stroke="#f04040" stroke-width="1.1" stroke-linejoin="miter"/><path d="M14 26.5 Q22 25 21.5 14" fill="none" stroke="#7a7aff" stroke-width="3"/><path d="M14 26.5 Q22 25 21.5 14" fill="none" stroke="#fff" stroke-width="1.3"/><path d="M18.2 15.5 L21.5 10.5 L24.8 15.5Z" fill="#fff" stroke="#7a7aff" stroke-width=".8"/></g><g transform="translate(1.5 191)"><path d="M5.3 6 L5.3 27.2 L12.8 27.2Z" fill="none" stroke="#555" stroke-width="1.1" stroke-linejoin="miter"/><path d="M21.7 10 L21.7 23 L27.4 23Z" fill="none" stroke="#f04040" stroke-width="1.1" stroke-linejoin="miter"/><path d="M9 15.5 H18 V13.5 L22 17 L18 20.5 V18.5 H9Z" fill="#fff" stroke="#5a5aff" stroke-width=".8"/></g><g transform="translate(36.8 191)"><path d="M3.2 13 L24.5 4 L10.3 18.3Z" fill="none" stroke="#555" stroke-width="1.1" stroke-linejoin="miter"/><path d="M14.8 23.6 L29 9.4 L21 29Z" fill="none" stroke="#f04040" stroke-width="1.1" stroke-linejoin="miter"/><path d="M11 22 L27 8" stroke="#7a7aff" stroke-width="0.9" stroke-dasharray="1.5 1.5"/></g><g transform="translate(1.5 226)"><path d="M4.5 9.2 H11.5 V7.199999999999999 L15.5 10.7 L11.5 14.2 V12.2 H4.5Z" fill="#fff" stroke="#5a5aff" stroke-width=".8"/><circle cx="21.7" cy="10.7" r="3.3" fill="none" stroke="#7a7aff" stroke-width="1.6" stroke-dasharray="3 1"/><path d="M5.3 16.5 L5.3 27.6 L12.8 27.6Z" fill="none" stroke="#555" stroke-width="1.1" stroke-linejoin="miter"/><path d="M16.4 25.1 L28.4 16.7 L28.4 25.1Z" fill="none" stroke="#f04040" stroke-width="1.1" stroke-linejoin="miter"/></g><g transform="translate(36.8 226)"><path d="M5 15.3 L5 26.8 L13 26.8Z" fill="none" stroke="#555" stroke-width="1.1" stroke-linejoin="miter"/><path d="M19.2 4.7 L19.2 16.4 L27.2 16.4Z" fill="none" stroke="#f04040" stroke-width="1.1" stroke-linejoin="miter"/><path d="M14 27 Q22 26 22.5 19" fill="none" stroke="#7a7aff" stroke-width="3"/><path d="M14 27 Q22 26 22.5 19" fill="none" stroke="#fff" stroke-width="1.3"/></g><g transform="translate(1.5 261)"><path d="M7.1 5.3 L18.5 5.3" stroke="#555" stroke-width="1.1" /><path d="M7.1 5.3 L7.1 16.4" stroke="#555" stroke-width="1.1" /><path d="M7.1 16.4 L18.5 5.3" stroke="#555" stroke-width="1.1" /><path d="M18.5 5.3 L27 20.8" stroke="#7a7aff" stroke-width="0.8" /><path d="M7.1 16.4 L15.5 20.8" stroke="#7a7aff" stroke-width="0.8" /><path d="M15.5 20.8 L21.3 14.2 L27 20.8Z" fill="none" stroke="#f04040" stroke-width="1.1" stroke-linejoin="miter"/><path d="M15.5 20.8 L15.5 29" stroke="#666" stroke-width="1.1" /><path d="M27 20.8 L27 29" stroke="#666" stroke-width="1.1" /></g><g transform="translate(1.5 304)"><path d="M6.9 17.8 L23.5 10.2" stroke="#f04040" stroke-width="1.1" /><path d="M10.9 25.6 L27 17.8" stroke="#222" stroke-width="1.1" /><path d="M12.3 15.4 L15.6 23.2" stroke="#4040ff" stroke-width="0.8" /></g><g transform="translate(36.8 304)"><path d="M5 17.8 L23.2 8.3" stroke="#f04040" stroke-width="1.1" /><path d="M9.7 26.3 L27.9 17.3" stroke="#222" stroke-width="1.1" /><circle cx="15.2" cy="23.2" r="1.7" fill="#f00"/></g><g transform="translate(1.5 347)"><path d="M4.5 6 L28.2 16.6" stroke="#222" stroke-width="1.1" /><path d="M4.5 28.5 L10 19" stroke="#222" stroke-width="1.1" /><path d="M10 19 L15 10.5" stroke="#f04040" stroke-width="1.1" /><g transform="translate(13.5 29) rotate(-65.2)"><path d="M0 -1.5 H10.3 V-3.5 L14.3 0 L10.3 3.5 V1.5 H0Z" fill="#fff" stroke="#5a5aff" stroke-width=".8"/></g></g><g transform="translate(36.8 347)"><path d="M6 6 L27.4 13.8" stroke="#222" stroke-width="1.1" /><path d="M6 28 L20 18.5" stroke="#222" stroke-width="1.1" /><path d="M20 18.5 L27.4 13.8" stroke="#f04040" stroke-width="1.1" /><path d="M20 9.5 L27.4 13.8" stroke="#f04040" stroke-width="1.1" /><g transform="translate(14 6) rotate(10.3)"><path d="M0 -1.5 H7.2 V-3.5 L11.2 0 L7.2 3.5 V1.5 H0Z" fill="#fff" stroke="#5a5aff" stroke-width=".8"/></g><g transform="translate(15 27) rotate(-35.0)"><path d="M0 -1.5 H8.2 V-3.5 L12.2 0 L8.2 3.5 V1.5 H0Z" fill="#fff" stroke="#5a5aff" stroke-width=".8"/></g></g><g transform="translate(1.5 382)"><path d="M22 4.5 L13 18" stroke="#222" stroke-width="1.1" /><path d="M13 18 L7 27" stroke="#f04040" stroke-width="1.1" /><g transform="translate(17 26) rotate(-57.5)"><path d="M0 -1.5 H9.0 V-3.5 L13.0 0 L9.0 3.5 V1.5 H0Z" fill="#fff" stroke="#5a5aff" stroke-width=".8"/></g><text x="23" y="27" font-size="7" fill="#222" font-family="Liberation Sans">x</text></g><g transform="translate(36.8 382)"><path d="M19 9.5 H11 Q7 9.5 7 13.5 V21 Q7 25 11 25 H19 V20 H13 V15 H19Z" fill="none" stroke="#444" stroke-width="1.1"/><path d="M19 9.5 H27 V15 H19 M19 20 H27 V25 H19" fill="none" stroke="#f04040" stroke-width="1.1"/><path d="M13 18.0 H22.5 V16.0 L26.5 19.5 L22.5 23.0 V21.0 H13Z" fill="#fff" stroke="#5a5aff" stroke-width=".8"/></g><g transform="translate(1.5 417)"><g opacity=".55"><path d="M3 23 L29 8 M6 7 L28 27" stroke="#f6a0a0" stroke-width=".8"/></g><rect x="9.5" y="11" width="13.5" height="12" fill="none" stroke="#7070ff" stroke-width="1"/><path d="M11 22 V18 Q11 14 16 14 Q21 14 21 18 V22" fill="none" stroke="#777" stroke-width=".9"/></g><g transform="translate(1.5 460)"><path d="M6.5 6.5 H15.5" stroke="#222" stroke-width="1.2"/><path d="M15.5 6.5 L24.6 17" stroke="#f04040" stroke-width="1.4"/><path d="M24.6 17 V25.5" stroke="#222" stroke-width="1.2"/></g><g transform="translate(36.8 460)"><path d="M6 6.5 H15" stroke="#222" stroke-width="1.2"/><path d="M15 6.5 Q25.5 6.5 25.5 17" fill="none" stroke="#f04040" stroke-width="1.4"/><path d="M25.5 17 V25.5" stroke="#222" stroke-width="1.2"/><circle cx="15.8" cy="16.5" r="0.9" fill="#2020ff"/></g><g transform="translate(1.5 503)"><g opacity="1"><path d="M4.1 25 L18.7 4" stroke="#222" stroke-width="1.1" /><path d="M11 14 L14 8 L16 9 L22 16 L20 17Z" fill="#f2f2f2" stroke="#777" stroke-width=".6"/><ellipse cx="24.5" cy="17" rx="3.6" ry="2.3" fill="none" stroke="#d02020" stroke-width="1.6"/><ellipse cx="19.5" cy="24" rx="2.2" ry="3.5" fill="none" stroke="#d02020" stroke-width="1.6"/><circle cx="12.5" cy="12.2" r="1.7" fill="#f00"/></g></g><g transform="translate(36.8 503)"><g opacity=".5"><path d="M4.1 25 L18.7 4" stroke="#222" stroke-width="1.1" /><path d="M11 14 L14 8 L16 9 L22 16 L20 17Z" fill="#f2f2f2" stroke="#777" stroke-width=".6"/><ellipse cx="24.5" cy="17" rx="3.6" ry="2.3" fill="none" stroke="#d02020" stroke-width="1.6"/><ellipse cx="19.5" cy="24" rx="2.2" ry="3.5" fill="none" stroke="#d02020" stroke-width="1.6"/><circle cx="12.5" cy="12.2" r="1.7" fill="#f00"/></g></g><g transform="translate(1.5 538)"><path d="M10.2 5.6 L10.2 28" stroke="#444" stroke-width="1.1" /><path d="M22.1 5.6 L22.1 28" stroke="#444" stroke-width="1.1" /><path d="M4 15.8 L29 15.8" stroke="#111" stroke-width="1.1" /><circle cx="10.2" cy="15.8" r="1.7" fill="#f00"/><circle cx="22.1" cy="15.8" r="1.7" fill="#f00"/></g><g transform="translate(36.8 538)"><path d="M7.7 5.6 L7.7 28" stroke="#444" stroke-width="1.1" /><path d="M18.2 5.6 L18.2 28" stroke="#444" stroke-width="1.1" /><path d="M18.2 13 L26 13" stroke="#111" stroke-width="1.3" /><path d="M18.2 19.8 L26 19.8" stroke="#111" stroke-width="1.3" /><path d="M7.7 13 L18.2 13" stroke="#aaa" stroke-width="0.7" stroke-dasharray="1 1"/><path d="M7.7 19.8 L18.2 19.8" stroke="#aaa" stroke-width="0.7" stroke-dasharray="1 1"/><circle cx="18.2" cy="13" r="1.7" fill="#f00"/><circle cx="18.2" cy="19.8" r="1.7" fill="#f00"/></g><g transform="translate(1.5 573)"><path d="M10.9 5.6 L10.9 25.9" stroke="#444" stroke-width="1.1" /><path d="M22.1 5.6 L22.1 25.9" stroke="#444" stroke-width="1.1" /><path d="M5.7 16.2 L27.3 16.2" stroke="#111" stroke-width="1.1" /><circle cx="10.9" cy="16.2" r="1.7" fill="#f00"/><circle cx="22.1" cy="16.2" r="1.7" fill="#f00"/><path d="M4.5 15 L7 17.4 M7 15 L4.5 17.4 M26 15 L28.5 17.4 M28.5 15 L26 17.4" stroke="#4a4aff" stroke-width=".6"/></g><g transform="translate(36.8 573)"><path d="M4.7 27 L12.5 19.6" stroke="#222" stroke-width="1.1" /><path d="M19.2 13.5 L27.3 5.6" stroke="#222" stroke-width="1.1" /><circle cx="15.9" cy="16.9" r="1.8" fill="#f00"/></g><g transform="translate(1.5 616)"><rect x="5.2" y="9.7" width="23" height="14.6" fill="#fff" stroke="#111" stroke-width="1.1"/><text x="7" y="22.5" font-size="13" fill="#111" font-family="Liberation Serif">A</text><path d="M18.5 11.8 V22.3" stroke="#111" stroke-width=".8"/></g><g transform="translate(36.8 616)"><rect x="3.2" y="10.8" width="25.6" height="14.2" fill="#fff" stroke="#111" stroke-width="1"/><path d="M16.4 10.8 V25" stroke="#111" stroke-width=".8"/><circle cx="9.2" cy="17.5" r="2.8" fill="none" stroke="#111" stroke-width=".8"/><path d="M5 17.5 H13.5 M9.2 13.3 V21.7" stroke="#111" stroke-width=".7"/><text x="17.5" y="22.8" font-size="9" fill="#111" font-family="Liberation Sans">.1</text><g transform="translate(19 10) rotate(-45)"><rect x="-6" y="-1.6" width="12" height="3.2" fill="#e8a030" stroke="#905010" stroke-width=".4"/><rect x="6" y="-1.6" width="2.5" height="3.2" fill="#e03030"/><path d="M-6 -1.6 L-9 0 L-6 1.6Z" fill="#f3d9a5"/></g></g><g transform="translate(1.5 651)"><defs><pattern id="hp" patternUnits="userSpaceOnUse" width="3" height="3" patternTransform="rotate(45)"><rect width="3" height="3" fill="#fff"/><rect width="1" height="3" fill="#444"/></pattern></defs><path d="M5 30 V22.5 L11 16.5 H27 V30Z" fill="url(#hp)" stroke="#333" stroke-width="1"/><circle cx="18.5" cy="23.5" r="3.2" fill="#fff" stroke="#222" stroke-width="1"/><g transform="translate(22 11) rotate(-45)"><rect x="-6" y="-1.8" width="13" height="3.6" fill="#e8a030" stroke="#905010" stroke-width=".4"/><rect x="7" y="-1.8" width="2.5" height="3.6" fill="#e03030"/><path d="M-6 -1.8 L-9.5 0 L-6 1.8Z" fill="#f3d9a5"/></g></g><g transform="translate(1.5 694)"><circle cx="8" cy="13.3" r="3" fill="#f4d040"/><path d="M8 8.5 V18 M3.3 13.3 H12.7 M4.7 10 L11.3 16.6 M11.3 10 L4.7 16.6" stroke="#f4d040" stroke-width=".8"/><path d="M11 12.5 Q14 6 18 7 Q21 8 22 11" fill="none" stroke="#888" stroke-width=".8"/><path d="M19.9 10 L27.2 26.5" stroke="#c84848" stroke-width="6.5" stroke-linecap="round"/><path d="M19.5 11.5 L25.5 25" stroke="#e66" stroke-width="2.5" stroke-linecap="round" opacity=".6"/></g><g transform="translate(1.5 737)"><rect x="19.9" y="8" width="7.7" height="6" fill="#b8b8b8" stroke="#777" stroke-width=".6"/><rect x="5.6" y="19" width="7.9" height="6" fill="#b8b8b8" stroke="#777" stroke-width=".6"/><rect x="10" y="11.5" width="13.2" height="9.3" fill="#f6f2de" stroke="#777" stroke-width=".6"/></g><g transform="translate(36.8 737)"><rect x="19.9" y="8" width="7.7" height="6" fill="#b8b8b8" stroke="#777" stroke-width=".6"/><rect x="5.6" y="19" width="7.9" height="6" fill="#b8b8b8" stroke="#777" stroke-width=".6"/><rect x="10" y="11.5" width="13.2" height="9.3" fill="#f6f2de" stroke="#777" stroke-width=".6"/></g><g transform="translate(1.5 780)"><rect x="6.9" y="5.3" width="17.2" height="6" rx="1" fill="#f2d060" stroke="#776020" stroke-width=".6"/><path d="M24 8 H26 V14 H17 V18" fill="none" stroke="#888" stroke-width=".8"/></g></svg><div id="dock" class="a"></div><div class="a" style="left:1155px;top:107px;width:300px;height:23px;background:linear-gradient(#ececec,#d8d8d8);border-top:1px solid #c9c9c9"></div><div class="t" style="left:1280px;top:113px;font-size:12px;color:#333">Elenco dei livelli</div><svg class="a" style="left:1155px;top:109px" width="40" height="20"><circle cx="9" cy="9.5" r="7" fill="#707070"/><path d="M6 6.5 L12 12.5 M12 6.5 L6 12.5" stroke="#fff" stroke-width="1.8"/><circle cx="27" cy="9.5" r="7" fill="#707070"/><rect x="22.8" y="8.3" width="5.5" height="4.5" fill="none" stroke="#fff" stroke-width="1.1"/><path d="M25 8.3 V6.2 H30.8 V10.6 H28.3" fill="none" stroke="#fff" stroke-width="1.1"/></svg><div class="a" style="left:1155.5px;top:130px;width:60px;height:26px;background:linear-gradient(#f8f8f8,#e4e4e4);border:1px solid #aaa;border-top:2px solid #b0b0b0;border-bottom:2px solid #b0b0b0"></div><div class="a" style="left:1215.5px;top:130px;width:60px;height:26px;background:linear-gradient(#f8f8f8,#e4e4e4);border:1px solid #aaa;border-top:2px solid #b0b0b0;border-bottom:2px solid #b0b0b0"></div><div class="a" style="left:1275.5px;top:130px;width:60px;height:26px;background:linear-gradient(#f8f8f8,#e4e4e4);border:1px solid #aaa;border-top:2px solid #b0b0b0;border-bottom:2px solid #b0b0b0"></div><div class="a" style="left:1335.5px;top:130px;width:60px;height:26px;background:linear-gradient(#f8f8f8,#e4e4e4);border:1px solid #aaa;border-top:2px solid #b0b0b0;border-bottom:2px solid #b0b0b0"></div><div class="a" style="left:1395.5px;top:130px;width:60px;height:26px;background:linear-gradient(#f8f8f8,#e4e4e4);border:1px solid #aaa;border-top:2px solid #b0b0b0;border-bottom:2px solid #b0b0b0"></div><svg class="a" style="left:1155px;top:130px" width="300" height="26"><g transform="translate(30 13) scale(1.0)"><path d="M-8 0 C-5 -6 5 -6 8 0 C5 6 -5 6 -8 0Z" fill="#000"/><circle cx="0" cy="0" r="3.6" fill="#fff"/><circle cx="0" cy="0.3" r="2.6" fill="#000"/><circle cx="-0.8" cy="-1" r="0.8" fill="#fff"/></g><g transform="translate(90 13) scale(1.0)"><path d="M-8 0 C-5 -6 5 -6 8 0 C5 6 -5 6 -8 0Z" fill="#a8a8a8"/><circle cx="0" cy="0" r="3.6" fill="#fff"/><circle cx="0" cy="0.3" r="2.6" fill="#a8a8a8"/><circle cx="-0.8" cy="-1" r="0.8" fill="#fff"/></g><path d="M150 7 V19 M144 13 H156" stroke="#e00000" stroke-width="3.4"/><path d="M204 13 H216" stroke="#e00000" stroke-width="3.6"/><g transform="translate(270 13) rotate(-45)"><rect x="-8" y="-1.8" width="14" height="3.6" fill="#e8a33a" stroke="#8a5a10" stroke-width=".5"/><rect x="6" y="-1.8" width="3" height="3.6" fill="#e03030"/><path d="M-8 -1.8 L-11 0 L-8 1.8Z" fill="#f3d9a5"/></g></svg><div class="a" style="left:1155px;top:176px;width:299px;height:20px;background:#ffd9d9"></div><div class="a" style="left:1147px;top:175.5px;width:313px;height:2px;background:#ff9a9a"></div><div class="a" style="left:1147px;top:195px;width:313px;height:2px;background:#ff9a9a"></div><div class="a" style="left:1155px;top:168px;width:1px;height:36px;background:#ff9f9f"></div><div class="a" style="left:1452px;top:168px;width:1px;height:36px;background:#ff9f9f"></div><div class="a" style="left:1161px;top:163px;width:16px;height:9px;border:1px solid #000;background:#fff"></div><div class="a" style="left:1161px;top:183px;width:16px;height:9px;border:1px solid #000;background:#f00"></div><div class="t" style="left:1183px;top:160px;font-size:14px;color:#000">0</div><div class="t" style="left:1183px;top:180px;font-size:14px;color:#000">Offset</div><svg class="a" style="left:1380px;top:156px" width="75" height="40"><g transform="translate(42.7 10.5) scale(0.9)"><path d="M-8 0 C-5 -6 5 -6 8 0 C5 6 -5 6 -8 0Z" fill="#000"/><circle cx="0" cy="0" r="3.6" fill="#fff"/><circle cx="0" cy="0.3" r="2.6" fill="#000"/><circle cx="-0.8" cy="-1" r="0.8" fill="#fff"/></g><g transform="translate(42.7 30.5) scale(0.9)"><path d="M-8 0 C-5 -6 5 -6 8 0 C5 6 -5 6 -8 0Z" fill="#200000"/><circle cx="0" cy="0" r="3.6" fill="#fff"/><circle cx="0" cy="0.3" r="2.6" fill="#200000"/><circle cx="-0.8" cy="-1" r="0.8" fill="#fff"/></g><path d="M61.8 10.5 V8.5 A3.9 3.9 0 0 1 69.6 8.5 V10.5" fill="none" stroke="#bbb" stroke-width="1.2"/><rect x="60.3" y="9.8" width="9.8" height="7.8" rx=".5" fill="#bbb"/><path d="M61.8 30.5 V28.5 A3.9 3.9 0 0 1 69.6 28.5 V30.5" fill="none" stroke="#c9a3a3" stroke-width="1.2"/><rect x="60.3" y="29.8" width="9.8" height="7.8" rx=".5" fill="#c9a3a3"/><g transform="translate(21 30.5) rotate(-45)"><rect x="-7" y="-1.6" width="12" height="3.2" fill="#e8a33a" stroke="#8a5a10" stroke-width=".5"/><rect x="5" y="-1.6" width="2.6" height="3.2" fill="#e03030"/><path d="M-7 -1.6 L-10 0 L-7 1.6Z" fill="#f3d9a5"/></g></svg><div id="righttb" class="a"></div><div class="hl" style="left:1456px;top:120px;width:43px;height:43px;background:#b8b8b8;border-radius:6px"></div><div class="hl" style="left:1456px;top:417px;width:43px;height:43px;background:#b8b8b8;border-radius:6px"></div><svg class="a" style="left:1455px;top:110px" width="45" height="400"><g transform="translate(-1455 -110)"><rect x="1462" y="116" width="2" height="2" fill="#9a9a9a"/><rect x="1468" y="116" width="2" height="2" fill="#9a9a9a"/><rect x="1474" y="116" width="2" height="2" fill="#9a9a9a"/><rect x="1480" y="116" width="2" height="2" fill="#9a9a9a"/><rect x="1486" y="116" width="2" height="2" fill="#9a9a9a"/><rect x="1458" y="261.0" width="1" height="1" fill="#777"/><rect x="1461" y="261.0" width="1" height="1" fill="#777"/><rect x="1464" y="261.0" width="1" height="1" fill="#777"/><rect x="1467" y="261.0" width="1" height="1" fill="#777"/><rect x="1470" y="261.0" width="1" height="1" fill="#777"/><rect x="1473" y="261.0" width="1" height="1" fill="#777"/><rect x="1476" y="261.0" width="1" height="1" fill="#777"/><rect x="1479" y="261.0" width="1" height="1" fill="#777"/><rect x="1482" y="261.0" width="1" height="1" fill="#777"/><rect x="1485" y="261.0" width="1" height="1" fill="#777"/><rect x="1488" y="261.0" width="1" height="1" fill="#777"/><rect x="1491" y="261.0" width="1" height="1" fill="#777"/><rect x="1494" y="261.0" width="1" height="1" fill="#777"/><rect x="1497" y="261.0" width="1" height="1" fill="#777"/><rect x="1458" y="409.0" width="1" height="1" fill="#777"/><rect x="1461" y="409.0" width="1" height="1" fill="#777"/><rect x="1464" y="409.0" width="1" height="1" fill="#777"/><rect x="1467" y="409.0" width="1" height="1" fill="#777"/><rect x="1470" y="409.0" width="1" height="1" fill="#777"/><rect x="1473" y="409.0" width="1" height="1" fill="#777"/><rect x="1476" y="409.0" width="1" height="1" fill="#777"/><rect x="1479" y="409.0" width="1" height="1" fill="#777"/><rect x="1482" y="409.0" width="1" height="1" fill="#777"/><rect x="1485" y="409.0" width="1" height="1" fill="#777"/><rect x="1488" y="409.0" width="1" height="1" fill="#777"/><rect x="1491" y="409.0" width="1" height="1" fill="#777"/><rect x="1494" y="409.0" width="1" height="1" fill="#777"/><rect x="1497" y="409.0" width="1" height="1" fill="#777"/><g transform="translate(1463 127)"><rect x=".5" y=".5" width="27" height="27" fill="#fff" stroke="#4a4a4a" stroke-width="1"/><rect x="0" y="0" width="28" height="4.3" fill="#000"/><rect x="1" y="1" width="3.6" height="3.3" fill="#fff"/><path d="M8 12.5 L17 8.5 V19 L8 23Z" fill="#e8e8e8" stroke="#333" stroke-width=".7"/><path d="M10.5 11.5 L20.5 7.5 V18 L10.5 22Z" fill="#fff" stroke="#333" stroke-width=".7"/><path d="M13 20 L18.5 11 V19" fill="none" stroke="#f44" stroke-width=".8"/><path d="M8 23 L10.5 22 M8 12.5 L10.5 11.5" stroke="#333" stroke-width=".6"/></g><g transform="translate(1463 174)"><rect x=".5" y=".5" width="27" height="27" fill="#fff" stroke="#4a4a4a" stroke-width="1"/><rect x="0" y="0" width="28" height="4.3" fill="#000"/><rect x="1" y="1" width="3.6" height="3.3" fill="#fff"/><rect x="7" y="10" width="11" height="8" fill="#f6efc8" stroke="#555" stroke-width=".7"/><circle cx="15.5" cy="17" r="4.8" fill="#f6efc8" stroke="#555" stroke-width=".7"/></g><g transform="translate(1463 220)"><rect x=".5" y=".5" width="27" height="27" fill="#fff" stroke="#4a4a4a" stroke-width="1"/><rect x="0" y="0" width="28" height="4.3" fill="#000"/><rect x="1" y="1" width="3.6" height="3.3" fill="#fff"/><rect x="5.3" y="10" width="17.3" height="11.5" rx="2.5" fill="#f7f6f4" stroke="#b8c8e0" stroke-width=".8"/></g><g transform="translate(1463 276)"><rect x=".5" y=".5" width="27" height="27" fill="#fff" stroke="#4a4a4a" stroke-width="1"/><rect x="0" y="0" width="28" height="4.3" fill="#000"/><rect x="1" y="1" width="3.6" height="3.3" fill="#fff"/><rect x="3.3" y="7.699999999999999" width="4.3" height="3.8" rx=".8" fill="#000"/><rect x="10.5" y="8.0" width="14.5" height="3.2" fill="#fff" stroke="#444" stroke-width=".7"/><rect x="3.3" y="13.9" width="4.3" height="3.8" rx=".8" fill="#000"/><rect x="10.5" y="14.200000000000001" width="14.5" height="3.2" fill="#fff" stroke="#444" stroke-width=".7"/><rect x="3.3" y="19.900000000000002" width="4.3" height="3.8" rx=".8" fill="#000"/><rect x="10.5" y="20.2" width="14.5" height="3.2" fill="#fff" stroke="#444" stroke-width=".7"/></g><g transform="translate(1463 322)"><rect x=".5" y=".5" width="27" height="27" fill="#fff" stroke="#4a4a4a" stroke-width="1"/><rect x="0" y="0" width="28" height="4.3" fill="#000"/><rect x="1" y="1" width="3.6" height="3.3" fill="#fff"/><path d="M7.5 9.5 Q14 7.5 20.5 9.5 L15.5 15 V22 L13.5 21 V15Z" fill="#9a9a9a" stroke="#555" stroke-width=".6"/><ellipse cx="14" cy="9.3" rx="6.5" ry="1.5" fill="#777"/></g><g transform="translate(1463 368)"><rect x=".5" y=".5" width="27" height="27" fill="#fff" stroke="#4a4a4a" stroke-width="1"/><rect x="0" y="0" width="28" height="4.3" fill="#000"/><rect x="1" y="1" width="3.6" height="3.3" fill="#fff"/><path d="M5.5 9.5 L10.5 12 V19.5 L5.5 22Z" fill="#e8e8e8" stroke="#444" stroke-width=".7"/><rect x="10.5" y="12" width="11.5" height="7.5" rx="2" fill="#8a8a8a"/><rect x="10.5" y="12" width="3.2" height="7.5" fill="#fff" stroke="#777" stroke-width=".4"/><path d="M3.5 15.8 H24" stroke="#f66" stroke-width=".7" stroke-dasharray="1.2 1"/></g><g transform="translate(1463 424)"><rect x=".5" y=".5" width="27" height="27" fill="#fff" stroke="#4a4a4a" stroke-width="1"/><rect x="0" y="0" width="28" height="4.3" fill="#000"/><rect x="1" y="1" width="3.6" height="3.3" fill="#fff"/><g fill="#aaa"><rect x="3" y="7.5" width="10" height="1.2"/><rect x="3" y="10.6" width="9" height="1.2"/><rect x="3" y="13.8" width="12" height="1.2"/><rect x="3" y="17" width="14" height="1.2"/></g><path d="M0 21.5 H28" stroke="#444" stroke-width=".7"/><rect x="9" y="23.3" width="16" height="1.6" fill="#555"/><path d="M4.5 23 L3 24 L4.5 25" fill="none" stroke="#444" stroke-width=".6"/></g><g transform="translate(1463 471)"><rect x=".5" y=".5" width="27" height="27" fill="#fff" stroke="#4a4a4a" stroke-width="1"/><rect x="0" y="0" width="28" height="4.3" fill="#000"/><rect x="1" y="1" width="3.6" height="3.3" fill="#fff"/><rect x="7.5" y="9" width="13" height="14.5" rx="1" fill="#c8882a"/><rect x="9" y="10.5" width="10" height="11.5" fill="#f4f4f4"/><rect x="11" y="7.8" width="6" height="2.8" rx=".8" fill="#999"/><path d="M17 22 L19 20 V22Z" fill="#999"/></g></g></svg><div id="status" class="a"></div><div class="t st" style="left:2px;top:808px">47.7778,5.0222</div><div class="t st" style="left:2px;top:828px">@47.7778,5.0222</div><div class="a" style="left:254px;top:802px;width:1px;height:40px;background:#8a8a8a"></div><div class="t st" style="left:256px;top:808px">48.041&lt;6°</div><div class="t st" style="left:256px;top:828px">@48.041&lt;6°</div><div class="a" style="left:506px;top:819px;width:6px;height:6px;border-radius:3px;background:#c4c4c4"></div><div class="t st" style="left:504px;top:812.5px;width:200px;text-align:right">Scegli linea, arco, cerchio, ellisse, spline o</div><div class="t st" style="left:504px;top:823.5px;width:200px;text-align:right">polilinea</div><svg class="a" style="left:721px;top:805px" width="22" height="32"><rect x="1.5" y="1.5" width="18" height="29" rx="9" fill="#fff" stroke="#222" stroke-width="1"/><path d="M1.5 14 Q10.5 11 19.5 14" fill="none" stroke="#222" stroke-width="1"/><rect x="8.5" y="4" width="4" height="8" rx="2" fill="none" stroke="#222" stroke-width="1"/><path d="M10.5 1.5 V4" stroke="#222"/></svg><div class="t st" style="left:760px;top:818px">Annulla</div><div class="a" style="left:940px;top:819px;width:6px;height:6px;border-radius:3px;background:#c4c4c4"></div><div class="t st" style="left:949px;top:818px">Nessun entità selezionate.</div><div class="a" style="left:1269.5px;top:819px;width:6px;height:6px;border-radius:3px;background:#c4c4c4"></div></body></html>
